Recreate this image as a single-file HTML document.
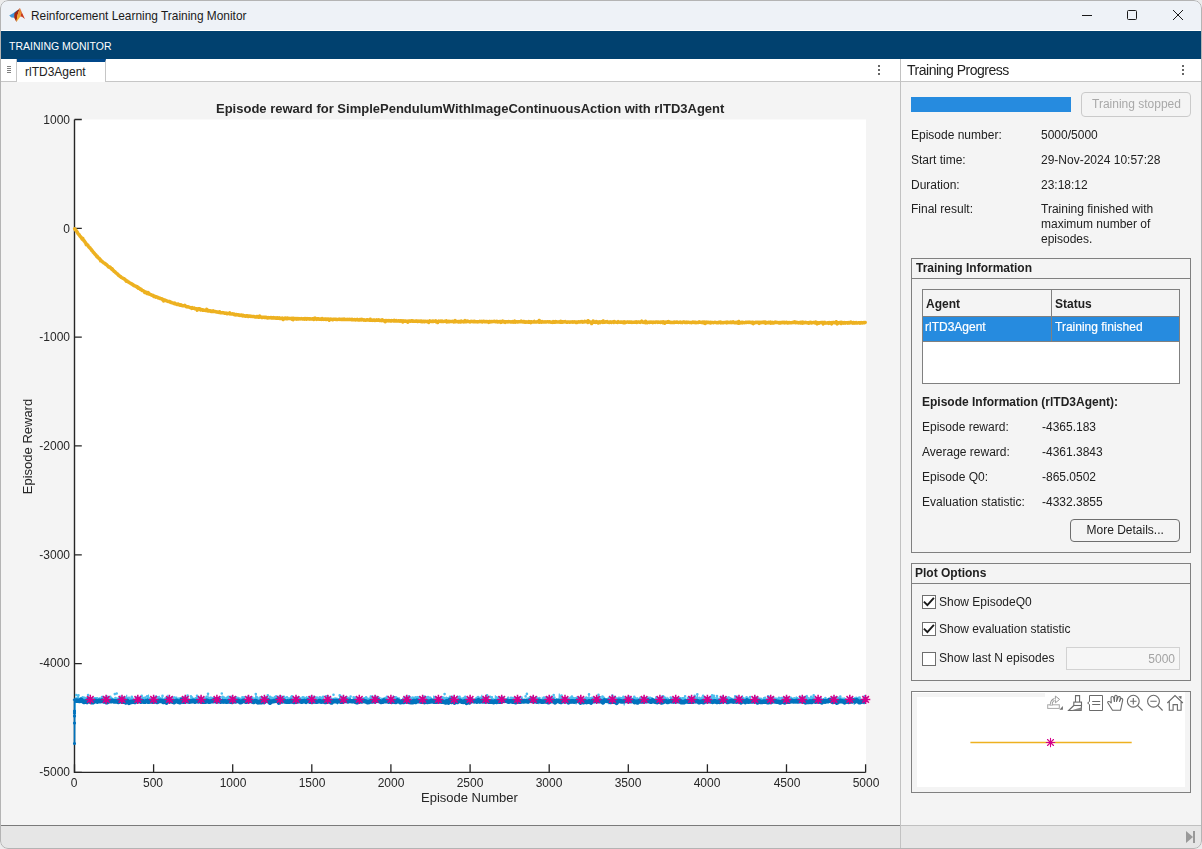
<!DOCTYPE html>
<html><head><meta charset="utf-8">
<style>
*{box-sizing:border-box;margin:0;padding:0}
html,body{width:1202px;height:849px;overflow:hidden;background:#ececec}
body{font-family:"Liberation Sans",sans-serif;font-size:12px;color:#212121;position:relative}
.a{position:absolute}
.t{position:absolute;white-space:nowrap;line-height:14px;font-size:12px}
.win{position:absolute;left:0;top:0;width:1202px;height:849px;border-radius:8px;overflow:hidden;background:#f4f4f4}
.frame{position:absolute;left:0;top:0;width:1202px;height:849px;border:1px solid #b4b4b4;border-radius:8px;pointer-events:none}
.chart{position:absolute;left:0;top:0}
.yl{position:absolute;left:20px;width:50px;text-align:right;font-size:12px;line-height:15px;color:#262626;will-change:transform}
.xl{position:absolute;top:776px;width:50px;text-align:center;font-size:12px;line-height:15px;color:#262626;will-change:transform}
.pb{position:absolute;border:1px solid #808080}
.chk{position:absolute;left:922px;width:14px;height:14px;border:1px solid #6e6e6e;background:#fff}
</style></head><body>
<div class="win">
  <!-- title bar -->
  <div class="a" style="left:0;top:0;width:1202px;height:30px;background:#eef2f7"></div>
  <div class="a" style="left:0;top:30px;width:1202px;height:1px;background:#fff"></div>
  <svg class="a" style="left:0;top:0" width="30" height="30" viewBox="0 0 30 30">
    <defs><linearGradient id="og" x1="0" y1="0" x2="0" y2="1"><stop offset="0" stop-color="#d9641f"/><stop offset="0.45" stop-color="#ee9a30"/><stop offset="1" stop-color="#f5bd2a"/></linearGradient></defs>
    <path d="M9.2 15.6 L14.4 12.6 L18.4 9.6 L15.6 14.2 L14.4 17.7 L11.4 17.4 Z" fill="#3f96da"/>
    <path d="M14.3 12.8 L18.4 9.6 L15.6 14.2 Z" fill="#1f5f9e"/>
    <path d="M14.4 13.4 L18.6 9.4 L19.9 8.1 L17.6 15 L16.4 22 L14.2 17.8 Z" fill="#a3260f"/>
    <path d="M19.9 8.1 L21.6 12.2 L20.4 16.4 L16.4 22 L17.4 15.4 Z" fill="url(#og)"/>
    <path d="M19.9 8.1 L24.9 18.9 L22 16.8 L20.4 16.4 L21.6 12.2 Z" fill="#c93a1b"/>
  </svg>
  <div class="t" style="left:31px;top:9px;font-size:11.9px;color:#1a1a1a">Reinforcement Learning Training Monitor</div>
  <!-- window controls -->
  <div class="a" style="left:1082px;top:15px;width:10px;height:1px;background:#1a1a1a"></div>
  <div class="a" style="left:1127px;top:10px;width:10px;height:10px;border:1px solid #1a1a1a;border-radius:1.5px"></div>
  <svg class="a" style="left:1172px;top:9px" width="12" height="12" viewBox="0 0 12 12"><path d="M1 1L11 11M11 1L1 11" stroke="#1a1a1a" stroke-width="1"/></svg>

  <!-- blue band -->
  <div class="a" style="left:0;top:31px;width:1202px;height:28px;background:#01416f"></div>
  <div class="t" style="left:9px;top:39px;font-size:10.5px;color:#fff">TRAINING MONITOR</div>

  <!-- left tab row -->
  <div class="a" style="left:0;top:59px;width:900px;height:23px;background:#fff;border-bottom:1px solid #c6c6c6"></div>
  <div class="a" style="left:0;top:59px;width:17px;height:23px;border-right:1px solid #c6c6c6;border-bottom:1px solid #c6c6c6;background:#fff"></div>
  <div class="a" style="left:7px;top:66px;width:4px;height:1px;background:#808080"></div>
  <div class="a" style="left:7px;top:68px;width:4px;height:1px;background:#808080"></div>
  <div class="a" style="left:7px;top:70px;width:4px;height:1px;background:#808080"></div>
  <div class="a" style="left:7px;top:72px;width:4px;height:1px;background:#808080"></div>
  <div class="a" style="left:17px;top:59px;width:89px;height:23px;background:#fff;border-top:3px solid #00478a;border-right:1px solid #c6c6c6"></div>
  <div class="t" style="left:25px;top:65px;font-size:12px;color:#212121">rlTD3Agent</div>
  <div class="a" style="left:878px;top:65px;width:2px;height:2px;background:#666"></div>
  <div class="a" style="left:878px;top:69px;width:2px;height:2px;background:#666"></div>
  <div class="a" style="left:878px;top:73px;width:2px;height:2px;background:#666"></div>

  <!-- left plot panel bg -->
  <div class="a" style="left:0;top:82px;width:900px;height:743px;background:#f4f4f4"></div>
  <div class="t" style="left:216px;top:102px;font-size:13px;font-weight:bold;color:#262626;will-change:transform">Episode reward for SimplePendulumWithImageContinuousAction with rlTD3Agent</div>
  <svg class="chart" width="1202" height="849" viewBox="0 0 1202 849"><rect x="74" y="119.5" width="792" height="652.7" fill="#fff"/><path d="M74.5 119.5V772.4H865.6" fill="none" stroke="#262626" stroke-width="1.4"/><path d="M74.5 119.5H81.8M74.5 228.3H81.8M74.5 337.1H81.8M74.5 445.9H81.8M74.5 554.8H81.8M74.5 663.6H81.8M74.5 772.4H81.8M74.5 772.4V764.3M153.6 772.4V764.3M232.7 772.4V764.3M311.8 772.4V764.3M390.9 772.4V764.3M470.1 772.4V764.3M549.2 772.4V764.3M628.3 772.4V764.3M707.4 772.4V764.3M786.5 772.4V764.3M865.6 772.4V764.3" stroke="#262626" stroke-width="1.3"/><path d="M74.7 228.8 75.2 229.6 75.7 230.1 76.2 230.7 76.7 231.5 77.2 232 77.7 233 78.2 233.9 78.7 234.2 79.2 234.8 79.7 235.7 80.2 236.3 80.7 236.9 81.2 237.3 81.7 238.2 82.2 239 82.7 238.4 83.2 239.9 83.7 240.2 84.2 241 84.7 241.5 85.2 242.4 85.7 242.8 86.2 244.6 86.7 244.3 87.2 244.9 87.7 244.9 88.2 246 88.7 246.7 89.2 247.3 89.7 247.5 90.2 248.3 90.7 248.8 91.2 249.4 91.7 250.4 92.2 250.6 92.7 251.4 93.2 252.2 93.7 252.5 94.2 253.2 94.7 253.8 95.2 254.4 95.7 254.7 96.2 255.5 96.7 256.4 97.2 256.3 97.7 257.4 98.2 257.7 98.7 258.1 99.2 258.3 99.7 259.4 100.2 259.4 100.7 260.8 101.2 260.7 101.7 261 102.2 261.6 102.7 261.9 103.2 262.4 103.7 263 104.2 262.9 104.7 263.5 105.2 263.7 105.7 264.3 106.2 264.3 106.7 264.9 107.2 265.3 107.7 266 108.2 266.4 108.7 266.9 109.2 266.8 109.7 267.5 110.2 267.3 110.7 268.1 111.2 268.6 111.7 269.3 112.2 268.9 112.7 269.9 113.2 270.3 113.7 270.8 114.2 271.6 114.7 271.6 115.2 272.1 115.7 272.7 116.2 273 116.7 273.4 117.2 273.7 117.7 274.3 118.2 274.7 118.7 275.4 119.2 275.7 119.7 276 120.2 276.5 120.7 276.7 121.2 277.3 121.7 277.5 122.2 277.9 122.7 277.9 123.2 278.6 123.7 278.5 124.2 278.8 124.7 279.5 125.2 279.7 125.7 280.3 126.2 281.1 126.7 280.7 127.2 281.1 127.7 281.6 128.2 282 128.7 282.1 129.2 282.4 129.7 283 130.2 283.2 130.7 283.2 131.2 283.7 131.7 284.1 132.2 284.1 132.7 284.7 133.2 284.8 133.7 285.5 134.2 285.6 134.7 285.9 135.2 286 135.7 286.4 136.2 286.3 136.7 286.8 137.2 287.4 137.7 287.1 138.2 288.1 138.7 287.8 139.2 288.6 139.7 288.5 140.2 289.2 140.7 289.3 141.2 289.3 141.7 290.2 142.2 290.5 142.7 290.4 143.2 290.7 143.7 291 144.2 291.1 144.7 292.5 145.2 291.8 145.7 292.2 146.2 292.3 146.7 293.3 147.2 292.7 147.7 293.5 148.2 292.5 148.7 294 149.2 294 149.7 294.1 150.2 294.4 150.7 294.6 151.2 294.9 151.7 295.1 152.2 295.3 152.7 295.3 153.2 295.6 153.7 296.4 154.2 296.1 154.7 296.2 155.2 296.7 155.7 297.1 156.2 296.7 156.7 297.1 157.2 297.2 157.7 297.2 158.2 297.9 158.7 297.9 159.2 298.1 159.7 298.1 160.2 298.6 160.7 298.5 161.2 298.8 161.7 298.8 162.2 298.9 162.7 299.7 163.2 299.5 163.7 300.9 164.2 299.9 164.7 300 165.2 300.2 165.7 300.6 166.2 300.6 166.7 300.8 167.2 301 167.7 301.4 168.2 301.5 168.7 301.6 169.2 301.6 169.7 301.5 170.2 302.2 170.7 302.4 171.2 302.3 171.7 302.6 172.2 302.8 172.7 303 173.2 303.2 173.7 303.1 174.2 303.6 174.7 303.2 175.2 303.8 175.7 303.9 176.2 304.1 176.7 304.5 177.2 304.5 177.7 304.1 178.2 304.1 178.7 304.8 179.2 304.6 179.7 304.9 180.2 305.2 180.7 304.8 181.2 304.9 181.7 305.5 182.2 305.6 182.7 305.7 183.2 305.8 183.7 305.8 184.2 305.8 184.7 305.4 185.2 306.1 185.7 306.1 186.2 306.7 186.7 306.7 187.2 306.9 187.7 306.7 188.2 306.9 188.7 307 189.2 307.1 189.7 307.5 190.2 307.4 190.7 307.7 191.2 307.8 191.7 308.3 192.2 307.7 192.7 308.3 193.2 308.2 193.7 308.3 194.2 308.1 194.7 308.4 195.2 308.8 195.7 308.7 196.2 308.8 196.7 308.8 197.2 310.2 197.7 309.1 198.2 308.7 198.7 309.1 199.2 308.9 199.7 308.7 200.2 309.4 200.7 309.9 201.2 309.7 201.7 309.5 202.2 309.7 202.7 310.2 203.2 310.1 203.7 310.1 204.2 310.2 204.7 310.3 205.2 310.5 205.7 310.5 206.2 310.5 206.7 309.3 207.2 310.7 207.7 310.5 208.2 311 208.7 310.5 209.2 310.8 209.7 310.9 210.2 310.7 210.7 311.4 211.2 311.5 211.7 311.1 212.2 311.4 212.7 311.4 213.2 310.8 213.7 311.5 214.2 311.5 214.7 311.6 215.2 311.4 215.7 311.7 216.2 311.7 216.7 312.1 217.2 312 217.7 312 218.2 312.4 218.7 312 219.2 312.1 219.7 311.9 220.2 312.7 220.7 312.6 221.2 312.7 221.7 312.7 222.2 312.6 222.7 312.7 223.2 312.7 223.7 312.8 224.2 312.9 224.7 313.3 225.2 313.2 225.7 313.1 226.2 313.1 226.7 313.2 227.2 313.7 227.7 313.6 228.2 313.5 228.7 313.5 229.2 313.4 229.7 312.8 230.2 314 230.7 313.8 231.2 313.9 231.7 314 232.2 314.1 232.7 313.8 233.2 314.2 233.7 314.1 234.2 314.6 234.7 314.3 235.2 314.7 235.7 314.9 236.2 314.6 236.7 314.6 237.2 314.8 237.7 314.9 238.2 314.7 238.7 315.1 239.2 315.5 239.7 315.1 240.2 315.2 240.7 315.1 241.2 315.4 241.7 315.1 242.2 315.2 242.7 315.8 243.2 315.4 243.7 315.9 244.2 316 244.7 315.8 245.2 315.9 245.7 316.3 246.2 315.9 246.7 315.8 247.2 315.7 247.7 316.1 248.2 316.4 248.7 316.4 249.2 316 249.7 316.1 250.2 316.2 250.7 316.4 251.2 316.3 251.7 316.5 252.2 316.5 252.7 316.4 253.2 316.5 253.7 316.6 254.2 316.6 254.7 316.8 255.2 317.1 255.7 316.9 256.2 316.8 256.7 316.5 257.2 317 257.7 316.5 258.2 316.7 258.7 317.2 259.2 317.2 259.7 316.1 260.2 316.8 260.7 317.1 261.2 317.1 261.7 317.4 262.2 317.2 262.7 317.4 263.2 317.2 263.7 317.2 264.2 317.4 264.7 317.4 265.2 317.3 265.7 317.6 266.2 317.3 266.7 317.8 267.2 317.9 267.7 317.9 268.2 317.6 268.7 317.8 269.2 317.7 269.7 317.7 270.2 317.7 270.7 317.5 271.2 317.5 271.7 318 272.2 317.8 272.7 317.9 273.2 318.1 273.7 317.6 274.2 317.8 274.7 318 275.2 318.1 275.7 317.9 276.2 318.3 276.7 318.1 277.2 317.8 277.7 317.9 278.2 318.3 278.7 318.3 279.2 317.8 279.7 318.5 280.2 318.4 280.7 318.6 281.2 318.2 281.7 318.2 282.2 318.1 282.7 318.9 283.2 319.4 283.7 318.7 284.2 318.3 284.7 318.5 285.2 318.1 285.7 318.4 286.2 318.7 286.7 318.2 287.2 318.1 287.7 318.6 288.2 318.3 288.7 318.5 289.2 318.5 289.7 318.6 290.2 318.5 290.7 318.4 291.2 318.6 291.7 319.1 292.2 318.4 292.7 318.7 293.2 319.7 293.7 318.4 294.2 318.7 294.7 318.6 295.2 318.5 295.7 318.9 296.2 318.6 296.7 319.1 297.2 318.6 297.7 318.9 298.2 318.7 298.7 318.6 299.2 318.9 299.7 318.8 300.2 319 300.7 318.8 301.2 318.6 301.7 318.8 302.2 318.9 302.7 319.1 303.2 318.7 303.7 318.9 304.2 318.5 304.7 319.1 305.2 318.7 305.7 318.5 306.2 318.9 306.7 319.2 307.2 318.6 307.7 318.7 308.2 318.8 308.7 318.7 309.2 319.1 309.7 318.8 310.2 318.8 310.7 319.1 311.2 318.9 311.7 319.1 312.2 318.8 312.7 318.8 313.2 318.6 313.7 319.5 314.2 319 314.7 319.1 315.2 318.2 315.7 319.1 316.2 319.1 316.7 319.5 317.2 318.9 317.7 318.8 318.2 318.9 318.7 318.8 319.2 319.3 319.7 319.3 320.2 318.9 320.7 318.9 321.2 319.1 321.7 319.5 322.2 318.6 322.7 319.3 323.2 319 323.7 319.4 324.2 319 324.7 319.2 325.2 318.9 325.7 319 326.2 319.5 326.7 319.4 327.2 319.2 327.7 319.1 328.2 318.9 328.7 319.2 329.2 320.3 329.7 319.3 330.2 319.3 330.7 319.1 331.2 319.3 331.7 319.3 332.2 319.6 332.7 319.8 333.2 319.3 333.7 319.2 334.2 319.3 334.7 319.2 335.2 319.2 335.7 319.4 336.2 319.2 336.7 319.5 337.2 319.4 337.7 319.5 338.2 319.4 338.7 319.3 339.2 319.2 339.7 319.4 340.2 319.3 340.7 319.5 341.2 319.5 341.7 319.2 342.2 319.5 342.7 319.2 343.2 319.4 343.7 319.4 344.2 319 344.7 319.5 345.2 319.6 345.7 319.5 346.2 319.4 346.7 319.5 347.2 319.3 347.7 319.5 348.2 319.4 348.7 319.6 349.2 319.3 349.7 319.6 350.2 319.6 350.7 319.6 351.2 319.5 351.7 319.8 352.2 319.3 352.7 319.8 353.2 319.7 353.7 319.7 354.2 319.8 354.7 319.5 355.2 319.6 355.7 319.9 356.2 319.8 356.7 319.8 357.2 319.4 357.7 319.9 358.2 320 358.7 320 359.2 319.8 359.7 319.5 360.2 320 360.7 319.8 361.2 319.3 361.7 319.9 362.2 319.5 362.7 319.6 363.2 319.8 363.7 320.2 364.2 319.8 364.7 320 365.2 320.3 365.7 320.3 366.2 320 366.7 319.9 367.2 319.7 367.7 319.9 368.2 320.1 368.7 320.1 369.2 320.1 369.7 320.3 370.2 319.2 370.7 320.1 371.2 320.3 371.7 320.3 372.2 320.4 372.7 320.3 373.2 320.1 373.7 320.3 374.2 320 374.7 319.9 375.2 320.4 375.7 320.2 376.2 320.3 376.7 319.9 377.2 320.2 377.7 320.2 378.2 320.1 378.7 319.8 379.2 320.3 379.7 320.6 380.2 320.5 380.7 320.3 381.2 320.4 381.7 320.6 382.2 319.8 382.7 320.4 383.2 320.6 383.7 320.6 384.2 320.9 384.7 320.8 385.2 321.7 385.7 320.6 386.2 320.7 386.7 320.5 387.2 320.6 387.7 320.8 388.2 321 388.7 320.6 389.2 320.6 389.7 320.7 390.2 321 390.7 320.7 391.2 321 391.7 320.5 392.2 320.7 392.7 320.7 393.2 320.9 393.7 321 394.2 320.4 394.7 320.6 395.2 320.9 395.7 320.7 396.2 320.5 396.7 321.1 397.2 321 397.7 321 398.2 320.8 398.7 321.1 399.2 320.8 399.7 321.2 400.2 320.7 400.7 320.7 401.2 321 401.7 320.8 402.2 321.1 402.7 321.9 403.2 320.8 403.7 321 404.2 320.9 404.7 321.2 405.2 320.9 405.7 320.9 406.2 321.3 406.7 321.5 407.2 321.5 407.7 322.1 408.2 321.1 408.7 321.4 409.2 321.1 409.7 320.9 410.2 321.1 410.7 321.2 411.2 320.9 411.7 320.8 412.2 320.8 412.7 321.3 413.2 321 413.7 321.1 414.2 321.2 414.7 321.3 415.2 321.1 415.7 321.3 416.2 321 416.7 321.1 417.2 321 417.7 321.5 418.2 321.2 418.7 321.1 419.2 321.1 419.7 321.2 420.2 321.4 420.7 320.9 421.2 321 421.7 321.2 422.2 321.8 422.7 321.5 423.2 321.2 423.7 321.4 424.2 321.7 424.7 321.2 425.2 321.2 425.7 321.6 426.2 321.4 426.7 321.5 427.2 321.2 427.7 321.7 428.2 321.7 428.7 322.3 429.2 321.5 429.7 320.9 430.2 321.5 430.7 321.3 431.2 321.4 431.7 321.5 432.2 321.3 432.7 321 433.2 321.5 433.7 321.2 434.2 321.3 434.7 321.3 435.2 321.3 435.7 320.9 436.2 321.7 436.7 321.5 437.2 321.7 437.7 322.5 438.2 321.4 438.7 321 439.2 321.2 439.7 321.2 440.2 321.3 440.7 321.5 441.2 321 441.7 321.5 442.2 321.1 442.7 321.5 443.2 321.4 443.7 321.4 444.2 321.4 444.7 321.3 445.2 321.3 445.7 321.1 446.2 320.9 446.7 321.9 447.2 321.9 447.7 321.8 448.2 321.6 448.7 321.3 449.2 321.8 449.7 321.5 450.2 321.5 450.7 321.4 451.2 321.5 451.7 321.4 452.2 321.5 452.7 321.3 453.2 321.4 453.7 322 454.2 321.5 454.7 321.5 455.2 320.7 455.7 321.7 456.2 321.3 456.7 321.5 457.2 321.7 457.7 321.6 458.2 321.6 458.7 321.9 459.2 321.4 459.7 321.6 460.2 321.4 460.7 321.9 461.2 321.1 461.7 321.4 462.2 321.5 462.7 321.7 463.2 321.7 463.7 321.9 464.2 321.2 464.7 321.7 465.2 320.7 465.7 321.4 466.2 321.7 466.7 321.4 467.2 321.1 467.7 321.5 468.2 321.3 468.7 321.5 469.2 321.7 469.7 321.7 470.2 322 470.7 321.6 471.2 321.3 471.7 321.5 472.2 321.4 472.7 321.4 473.2 321.7 473.7 321.5 474.2 321.2 474.7 321.8 475.2 321.6 475.7 321.7 476.2 321.7 476.7 321.8 477.2 321.7 477.7 321.9 478.2 321.7 478.7 321.7 479.2 321.7 479.7 321.3 480.2 321.6 480.7 321.6 481.2 321.7 481.7 321.4 482.2 322 482.7 321.7 483.2 321.4 483.7 321.3 484.2 321.6 484.7 321.7 485.2 321.5 485.7 321.7 486.2 321.5 486.7 321.8 487.2 321.5 487.7 321.7 488.2 321.9 488.7 322.3 489.2 321.5 489.7 321.6 490.2 321.5 490.7 321.9 491.2 321.5 491.7 321.6 492.2 321.7 492.7 321.5 493.2 321.5 493.7 321.6 494.2 321.3 494.7 321.4 495.2 321.6 495.7 321.8 496.2 321.7 496.7 321.3 497.2 321.6 497.7 321.9 498.2 321.9 498.7 321.7 499.2 321.5 499.7 321.9 500.2 321.6 500.7 322.3 501.2 321.6 501.7 322.1 502.2 321.8 502.7 321.2 503.2 321.6 503.7 322 504.2 321.6 504.7 321.7 505.2 322.3 505.7 321.9 506.2 321.7 506.7 321.7 507.2 321.8 507.7 322 508.2 321.7 508.7 321.4 509.2 321.7 509.7 321.8 510.2 321.8 510.7 322.1 511.2 321.9 511.7 322 512.2 321.5 512.7 322 513.2 322.2 513.7 322 514.2 321.8 514.7 321.1 515.2 322.2 515.7 321.6 516.2 321.8 516.7 321.9 517.2 322 517.7 321.7 518.2 321.9 518.7 321.7 519.2 321.8 519.7 321.8 520.2 321.6 520.7 321.8 521.2 321.2 521.7 321.6 522.2 321.8 522.7 322 523.2 321.6 523.7 321.9 524.2 321.6 524.7 322.1 525.2 322.3 525.7 322.3 526.2 321.8 526.7 322 527.2 321.9 527.7 321.9 528.2 322.2 528.7 321.5 529.2 322.1 529.7 321.8 530.2 322.2 530.7 322.6 531.2 321.7 531.7 321.9 532.2 322 532.7 321.9 533.2 322 533.7 321.7 534.2 321.4 534.7 322.1 535.2 322 535.7 321.9 536.2 321.9 536.7 322.1 537.2 321.8 537.7 321.7 538.2 321.8 538.7 322.1 539.2 320.5 539.7 322.1 540.2 321.7 540.7 321.6 541.2 322.2 541.7 321.9 542.2 321.6 542.7 321.8 543.2 322.1 543.7 322.1 544.2 321.8 544.7 322 545.2 322 545.7 321.8 546.2 322 546.7 321.9 547.2 321.8 547.7 321.8 548.2 321.9 548.7 321.9 549.2 321.8 549.7 321.8 550.2 322.2 550.7 322 551.2 322.1 551.7 322.2 552.2 322 552.7 322.4 553.2 321.7 553.7 322.1 554.2 321.8 554.7 322.3 555.2 322.3 555.7 321.5 556.2 321.7 556.7 322.1 557.2 322.1 557.7 322.1 558.2 321.9 558.7 322 559.2 322.1 559.7 321.9 560.2 322.2 560.7 321.4 561.2 322.1 561.7 321.7 562.2 322.2 562.7 321.9 563.2 321.8 563.7 322 564.2 321.7 564.7 321.8 565.2 321.6 565.7 321.9 566.2 322.1 566.7 322.2 567.2 321.9 567.7 322.2 568.2 322 568.7 321.9 569.2 322.1 569.7 322.2 570.2 321.9 570.7 321.9 571.2 321.9 571.7 322 572.2 321.8 572.7 322.2 573.2 321.9 573.7 322.1 574.2 321.8 574.7 322.1 575.2 322.1 575.7 321.9 576.2 322.4 576.7 322.1 577.2 322.4 577.7 322.2 578.2 321.8 578.7 321.9 579.2 322.1 579.7 322 580.2 322 580.7 321.9 581.2 321.6 581.7 322 582.2 321.5 582.7 322.1 583.2 321.9 583.7 321.9 584.2 322 584.7 321.4 585.2 321.7 585.7 321.6 586.2 321.8 586.7 321.6 587.2 321.8 587.7 322.4 588.2 320.7 588.7 322.2 589.2 321.7 589.7 322.1 590.2 322 590.7 322 591.2 322.2 591.7 323.5 592.2 322.1 592.7 322.1 593.2 321 593.7 322.2 594.2 322 594.7 322.2 595.2 322 595.7 322.4 596.2 321.6 596.7 322 597.2 322.3 597.7 322 598.2 322.9 598.7 322 599.2 321.8 599.7 322.1 600.2 322.6 600.7 322.3 601.2 321.8 601.7 321.9 602.2 322 602.7 322.3 603.2 321 603.7 321.9 604.2 322.3 604.7 322.3 605.2 322 605.7 321.8 606.2 321.7 606.7 321.9 607.2 321.6 607.7 322.3 608.2 322 608.7 322.2 609.2 322.5 609.7 322.4 610.2 321.8 610.7 322.3 611.2 322.4 611.7 321.9 612.2 321.9 612.7 322.1 613.2 321.8 613.7 322.4 614.2 321.6 614.7 321.9 615.2 322.1 615.7 322.1 616.2 322.2 616.7 322.2 617.2 322.1 617.7 322.4 618.2 321.7 618.7 322.1 619.2 322 619.7 322.2 620.2 322.2 620.7 321.9 621.2 322 621.7 322.3 622.2 322.2 622.7 322 623.2 322.6 623.7 322.7 624.2 321.8 624.7 322.2 625.2 322.7 625.7 322.3 626.2 322.2 626.7 322.1 627.2 322 627.7 322.1 628.2 322 628.7 322.3 629.2 322.1 629.7 322.1 630.2 321.9 630.7 322.2 631.2 322 631.7 322.1 632.2 322.4 632.7 322.3 633.2 322.3 633.7 322.3 634.2 322.2 634.7 322.1 635.2 322.1 635.7 322.3 636.2 321.9 636.7 322.5 637.2 322.2 637.7 322 638.2 322.1 638.7 322 639.2 322.2 639.7 322 640.2 322.4 640.7 322 641.2 321.7 641.7 321.2 642.2 321.8 642.7 322.2 643.2 322.4 643.7 322.3 644.2 321.9 644.7 322 645.2 322.6 645.7 321.3 646.2 322.2 646.7 322.4 647.2 322.8 647.7 322.5 648.2 322.3 648.7 322.3 649.2 322.4 649.7 322.1 650.2 322 650.7 322.2 651.2 322 651.7 322.2 652.2 322.3 652.7 322.7 653.2 322 653.7 322.2 654.2 322.2 654.7 322.3 655.2 322.5 655.7 322.1 656.2 322.1 656.7 321.9 657.2 322 657.7 322.4 658.2 322.3 658.7 322 659.2 322.2 659.7 322.3 660.2 322.4 660.7 322.1 661.2 322.2 661.7 321.9 662.2 322 662.7 322.6 663.2 321.8 663.7 322.2 664.2 322.3 664.7 323.2 665.2 322.1 665.7 322.3 666.2 322.3 666.7 322.3 667.2 321.9 667.7 322.2 668.2 322.1 668.7 321.5 669.2 322.3 669.7 322.4 670.2 322.5 670.7 322.2 671.2 322.5 671.7 322.6 672.2 322.5 672.7 322.6 673.2 322.3 673.7 322.3 674.2 322.5 674.7 322 675.2 322.3 675.7 322.2 676.2 322.2 676.7 321.9 677.2 322.1 677.7 322.3 678.2 322.5 678.7 322.5 679.2 322.3 679.7 322.3 680.2 322.1 680.7 322.4 681.2 322.3 681.7 322.5 682.2 322.7 682.7 322.3 683.2 322 683.7 322.1 684.2 322 684.7 322.1 685.2 322.6 685.7 322.4 686.2 322 686.7 322.5 687.2 322.6 687.7 322.3 688.2 322.2 688.7 322.3 689.2 322.4 689.7 322.5 690.2 322.6 690.7 322.6 691.2 322.6 691.7 322.7 692.2 322.5 692.7 322 693.2 322.3 693.7 322.4 694.2 322.3 694.7 322.6 695.2 322.3 695.7 322.2 696.2 322.7 696.7 322.5 697.2 322.4 697.7 322.6 698.2 322.6 698.7 322.4 699.2 321.8 699.7 322.2 700.2 322.3 700.7 322.2 701.2 322.4 701.7 322.6 702.2 322.3 702.7 322.1 703.2 322.8 703.7 322.3 704.2 322.1 704.7 322.4 705.2 323.5 705.7 322.2 706.2 322.6 706.7 322.3 707.2 322.2 707.7 322.4 708.2 322.6 708.7 322.3 709.2 322.5 709.7 322.4 710.2 323 710.7 322.3 711.2 322.7 711.7 322.4 712.2 322.4 712.7 322.6 713.2 322.6 713.7 322.7 714.2 322.5 714.7 322.3 715.2 322.3 715.7 322.5 716.2 322.6 716.7 322.7 717.2 322.5 717.7 322.7 718.2 322.8 718.7 322.5 719.2 322.1 719.7 322.2 720.2 322.1 720.7 322.8 721.2 322.3 721.7 322.7 722.2 322.6 722.7 322.8 723.2 322.7 723.7 322.4 724.2 322.4 724.7 322.5 725.2 322.5 725.7 322.3 726.2 322.4 726.7 322.8 727.2 322.1 727.7 322.5 728.2 322.3 728.7 322.5 729.2 322.6 729.7 322.5 730.2 322.6 730.7 322.1 731.2 322.7 731.7 322.3 732.2 322.6 732.7 322.5 733.2 321.9 733.7 322.3 734.2 322.5 734.7 322.8 735.2 322.5 735.7 322.5 736.2 322.2 736.7 322.8 737.2 322.9 737.7 322.5 738.2 323.1 738.7 321.5 739.2 322.7 739.7 323.1 740.2 322.7 740.7 322.8 741.2 322.6 741.7 322.3 742.2 322.8 742.7 322.2 743.2 322.5 743.7 322.6 744.2 322.7 744.7 322.6 745.2 322.6 745.7 322.3 746.2 322.2 746.7 322.5 747.2 322.4 747.7 322.2 748.2 322.2 748.7 322.4 749.2 322.1 749.7 322.2 750.2 322.2 750.7 322.6 751.2 322.6 751.7 323 752.2 322.2 752.7 322.4 753.2 323.6 753.7 322.5 754.2 322.5 754.7 322.9 755.2 322.5 755.7 322.3 756.2 322.2 756.7 322.6 757.2 322.6 757.7 322.2 758.2 322.3 758.7 322.7 759.2 323.4 759.7 322.4 760.2 322.7 760.7 322.7 761.2 322.2 761.7 322.5 762.2 322.6 762.7 322.4 763.2 322.1 763.7 322.5 764.2 322.7 764.7 322.1 765.2 322.1 765.7 323.1 766.2 322.3 766.7 322.8 767.2 322.8 767.7 322.8 768.2 322.6 768.7 322.3 769.2 322.7 769.7 322.4 770.2 322 770.7 323.2 771.2 322.7 771.7 323 772.2 322.4 772.7 322.9 773.2 322.9 773.7 322.9 774.2 322.6 774.7 322.3 775.2 322.5 775.7 322.1 776.2 322.2 776.7 322.6 777.2 322.4 777.7 322.6 778.2 322.6 778.7 323 779.2 322.9 779.7 322.6 780.2 322.9 780.7 322.4 781.2 322.5 781.7 322.8 782.2 322.3 782.7 322.5 783.2 322.3 783.7 322.6 784.2 323 784.7 322.4 785.2 322.7 785.7 322.4 786.2 322.4 786.7 322.3 787.2 322.9 787.7 323.1 788.2 322.7 788.7 322.5 789.2 322.8 789.7 322.6 790.2 322.8 790.7 322.7 791.2 322.7 791.7 322.8 792.2 322.5 792.7 322.5 793.2 322.3 793.7 322.5 794.2 322.3 794.7 321.8 795.2 322.4 795.7 322.7 796.2 322.7 796.7 322.3 797.2 322.5 797.7 322.4 798.2 322.8 798.7 323 799.2 322.8 799.7 322.6 800.2 323 800.7 322.3 801.2 323 801.7 322.5 802.2 322 802.7 323.2 803.2 323 803.7 322.4 804.2 322.7 804.7 322.6 805.2 322.7 805.7 322.3 806.2 322.5 806.7 322.8 807.2 322.7 807.7 322.9 808.2 322.7 808.7 323.2 809.2 322.5 809.7 322.7 810.2 322.3 810.7 322.4 811.2 323 811.7 322.5 812.2 322.8 812.7 322.7 813.2 322.5 813.7 322.6 814.2 322.6 814.7 322.6 815.2 322.9 815.7 322 816.2 322.6 816.7 322.5 817.2 323.8 817.7 322.7 818.2 322.9 818.7 323.3 819.2 322.9 819.7 322.7 820.2 322.7 820.7 322.5 821.2 322.5 821.7 322.5 822.2 322.6 822.7 322.6 823.2 323.9 823.7 322.6 824.2 322.7 824.7 322.4 825.2 323.1 825.7 322.8 826.2 323.1 826.7 322.9 827.2 323 827.7 322.7 828.2 322.9 828.7 323.3 829.2 322.5 829.7 323 830.2 323.1 830.7 322.8 831.2 322.9 831.7 323.8 832.2 322.6 832.7 322.8 833.2 322.5 833.7 322.6 834.2 322.6 834.7 322.7 835.2 322.8 835.7 322.8 836.2 321.7 836.7 323.2 837.2 323.9 837.7 322.9 838.2 322.7 838.7 322.7 839.2 322.9 839.7 322.8 840.2 322.4 840.7 322.9 841.2 323.4 841.7 322.3 842.2 323 842.7 322.8 843.2 322.7 843.7 323.1 844.2 322.5 844.7 322.8 845.2 323.1 845.7 322.7 846.2 322.7 846.7 322.8 847.2 322.7 847.7 323.1 848.2 322.6 848.7 323 849.2 322.5 849.7 322.9 850.2 322.7 850.7 322.2 851.2 322.8 851.7 322.5 852.2 322.7 852.7 323.1 853.2 322.5 853.7 322.5 854.2 323.1 854.7 322.8 855.2 323.1 855.7 322.9 856.2 322.6 856.7 322.8 857.2 323.1 857.7 323 858.2 322.8 858.7 322.8 859.2 322.8 859.7 322.7 860.2 323.2 860.7 322.8 861.2 322.5 861.7 322.7 862.2 323 862.7 322.9 863.2 322.8 863.7 322.6 864.2 322.8 864.7 322.4 865.2 322.5" fill="none" stroke="#EDB120" stroke-width="3.5" stroke-linejoin="round" stroke-linecap="round"/><path d="M74.5 743.5 74.7 723 74.8 716 75 713 75.1 711 75.4 700 75.8 700.3 76.1 701.9 76.4 698.2 76.7 700 77 701.8 77.3 698.2 77.7 698.7 78 697.3 78.3 701 78.6 700.7 78.9 697.8 79.2 701.7 79.6 699.3 79.9 699.5 80.2 700.7 80.5 701.2 80.8 698.6 81.1 700.4 81.5 699.9 81.8 702.2 82.1 698.9 82.4 702.1 82.7 697.4 83 700.9 83.4 702.3 83.7 701 84 702 84.3 698.4 84.6 697.9 84.9 699.1 85.3 701.8 85.6 700.4 85.9 699.8 86.2 702.2 86.5 700.7 86.8 697 87.2 698.3 87.5 700.1 87.8 699.4 88.1 695 88.4 699.7 88.7 699.4 89.1 702.6 89.4 700 89.7 699.9 90 699.5 90.3 699.3 90.6 700 91 699.7 91.3 700 91.6 699.9 91.9 698.8 92.2 700.3 92.5 698.4 92.9 700.8 93.2 702.5 93.5 699.8 93.8 700.1 94.1 703.3 94.4 699.9 94.8 698.4 95.1 700.6 95.4 698.7 95.7 701 96 698.2 96.3 700.2 96.7 701.7 97 700.6 97.3 698.4 97.6 700.3 97.9 700.1 98.2 702.3 98.5 699.4 98.9 699.6 99.2 700.7 99.5 699.7 99.8 698.5 100.1 698.9 100.4 700.2 100.8 700 101.1 698.6 101.4 699.7 101.7 700.1 102 697 102.3 697.8 102.7 697 103 697.5 103.3 698.1 103.6 699.2 103.9 699.5 104.2 699.7 104.6 699.5 104.9 699.4 105.2 702.8 105.5 700.3 105.8 698.9 106.1 698.3 106.5 699.9 106.8 702.9 107.1 700.5 107.4 698.3 107.7 700.6 108 698.6 108.4 701.5 108.7 699.5 109 702.2 109.3 701.7 109.6 699.4 109.9 702.2 110.3 696.8 110.6 702.7 110.9 698 111.2 699.8 111.5 699.3 111.8 699.3 112.2 698.8 112.5 699.8 112.8 700.6 113.1 700.8 113.4 701.6 113.7 702.7 114.1 699.9 114.4 701.3 114.7 699.9 115 697.3 115.3 701.2 115.6 698.1 116 699.2 116.3 700.6 116.6 699.1 116.9 698.6 117.2 700.7 117.5 701.4 117.9 699 118.2 699.4 118.5 700.5 118.8 700 119.1 699.5 119.4 702.6 119.8 699.5 120.1 699.8 120.4 696.8 120.7 700.9 121 699.4 121.3 701.1 121.6 699.5 122 700.1 122.3 699.8 122.6 700 122.9 698.5 123.2 701.9 123.5 697.6 123.9 697.6 124.2 700.9 124.5 698.7 124.8 700.1 125.1 698.7 125.4 701 125.8 698.4 126.1 699.6 126.4 699.6 126.7 694.7 127 699.9 127.3 698.5 127.7 700.2 128 698.1 128.3 701.8 128.6 702.2 128.9 699.5 129.2 699.1 129.6 700.5 129.9 701.1 130.2 699.7 130.5 701 130.8 700.7 131.1 698.8 131.5 698.6 131.8 696.8 132.1 703.6 132.4 698.3 132.7 701.9 133 700.9 133.4 699.4 133.7 700.1 134 699.3 134.3 700.6 134.6 700.2 134.9 700.8 135.3 699.6 135.6 699.1 135.9 699.9 136.2 700.1 136.5 698.3 136.8 698.7 137.2 696.2 137.5 697.5 137.8 701.3 138.1 700.2 138.4 702.9 138.7 701.7 139.1 698.3 139.4 699.7 139.7 700.5 140 701.2 140.3 700.7 140.6 700.8 141 701.4 141.3 701.4 141.6 701 141.9 701.3 142.2 700.1 142.5 697.9 142.9 701 143.2 699.1 143.5 702.2 143.8 703.1 144.1 698.7 144.4 702.5 144.7 702.3 145.1 702.2 145.4 697.6 145.7 701.4 146 702.6 146.3 699.6 146.6 699.6 147 699.6 147.3 700.3 147.6 703.8 147.9 699.3 148.2 698.2 148.5 694.6 148.9 700.9 149.2 699.9 149.5 700.7 149.8 698.7 150.1 700.1 150.4 698.8 150.8 701.7 151.1 701.6 151.4 701.3 151.7 701 152 698.6 152.3 701 152.7 702.1 153 700.5 153.3 701.5 153.6 699.9 153.9 701.5 154.2 700.8 154.6 701.6 154.9 701.3 155.2 699.3 155.5 698.8 155.8 699.3 156.1 700.5 156.5 698.3 156.8 698.8 157.1 700 157.4 703.4 157.7 701.1 158 697 158.4 700.8 158.7 700.6 159 699.4 159.3 695.9 159.6 698.6 159.9 700.3 160.3 702.6 160.6 701.3 160.9 699.4 161.2 699.4 161.5 700.7 161.8 700.5 162.2 701.9 162.5 695.9 162.8 699.9 163.1 699.5 163.4 699 163.7 699.3 164.1 698.9 164.4 699.2 164.7 700.9 165 700.5 165.3 701.8 165.6 699.1 166 698.1 166.3 700.7 166.6 699.5 166.9 702.3 167.2 700.2 167.5 701 167.8 694.7 168.2 699.2 168.5 702.6 168.8 699.5 169.1 700.2 169.4 699.9 169.7 698.8 170.1 700.3 170.4 701.5 170.7 700.4 171 699.2 171.3 703.2 171.6 701.3 172 700.1 172.3 700 172.6 703.1 172.9 701 173.2 699.1 173.5 700.9 173.9 701.4 174.2 697.3 174.5 697.5 174.8 701.7 175.1 700.3 175.4 701.9 175.8 702 176.1 700 176.4 697.9 176.7 699.8 177 699.4 177.3 701.5 177.7 701.2 178 699.4 178.3 700.5 178.6 699.2 178.9 699.7 179.2 700.7 179.6 700.1 179.9 699.3 180.2 699 180.5 702.8 180.8 702.5 181.1 699.6 181.5 700.9 181.8 697.5 182.1 698.5 182.4 699.7 182.7 698.3 183 698.1 183.4 699.6 183.7 699 184 701.9 184.3 697.3 184.6 698.3 184.9 701.4 185.3 701.3 185.6 702.2 185.9 699.3 186.2 698.8 186.5 701.7 186.8 701.4 187.2 698.7 187.5 703.2 187.8 700.4 188.1 701.6 188.4 700 188.7 699.4 189.1 701 189.4 700 189.7 700.3 190 699.5 190.3 700.1 190.6 701.1 190.9 696.3 191.3 701.1 191.6 697 191.9 701.4 192.2 699.3 192.5 701.8 192.8 699.8 193.2 702.4 193.5 699.9 193.8 698.8 194.1 698.9 194.4 700.5 194.7 701 195.1 698.7 195.4 703.5 195.7 699.3 196 699.8 196.3 698 196.6 701.5 197 695.8 197.3 698.5 197.6 699 197.9 701.1 198.2 698.5 198.5 699.3 198.9 699.7 199.2 700 199.5 699.7 199.8 699.5 200.1 697.8 200.4 698.7 200.8 699.9 201.1 697.5 201.4 699.5 201.7 700.5 202 702 202.3 700 202.7 698.6 203 700.4 203.3 700 203.6 700.9 203.9 700.4 204.2 699.2 204.6 700.7 204.9 699.7 205.2 703.4 205.5 699.7 205.8 698.3 206.1 702.7 206.5 700.9 206.8 700.2 207.1 699.8 207.4 700.2 207.7 700.5 208 693.8 208.4 703.5 208.7 696.7 209 700.4 209.3 701.1 209.6 701.4 209.9 697 210.3 699 210.6 699.1 210.9 701.6 211.2 701.6 211.5 700.9 211.8 700 212.2 700.8 212.5 701.1 212.8 701.1 213.1 702.3 213.4 698.3 213.7 699 214.1 699.5 214.4 702.3 214.7 699.4 215 701.2 215.3 700.5 215.6 700.3 215.9 701.8 216.3 700.2 216.6 700.9 216.9 701.4 217.2 701.5 217.5 697.8 217.8 699.7 218.2 700.6 218.5 702.7 218.8 702.1 219.1 701.3 219.4 699.8 219.7 700.5 220.1 697.2 220.4 698.9 220.7 699.4 221 699.4 221.3 701.5 221.6 700.1 222 700.5 222.3 699.2 222.6 696.9 222.9 697.9 223.2 700 223.5 699.9 223.9 699.3 224.2 698.1 224.5 696.5 224.8 702.2 225.1 698.8 225.4 701.3 225.8 698.7 226.1 700.4 226.4 702.1 226.7 697.8 227 702.7 227.3 700.3 227.7 698.4 228 699.1 228.3 696.7 228.6 698.6 228.9 697.6 229.2 699.3 229.6 698.4 229.9 701.6 230.2 700.9 230.5 699.5 230.8 701.5 231.1 701.5 231.5 697.5 231.8 698.7 232.1 700.8 232.4 700.2 232.7 699.5 233 700.2 233.4 699.4 233.7 699.4 234 699.1 234.3 701.7 234.6 698.5 234.9 699.1 235.3 697.3 235.6 701.1 235.9 701.3 236.2 698.8 236.5 697.6 236.8 697.8 237.2 701.3 237.5 698.3 237.8 700.3 238.1 701.3 238.4 698.1 238.7 700.1 239 700.4 239.4 699.1 239.7 702 240 698.7 240.3 700.6 240.6 699.8 240.9 701.9 241.3 697.9 241.6 700.1 241.9 699.6 242.2 699.3 242.5 699.9 242.8 700.7 243.2 699.3 243.5 698.4 243.8 699.3 244.1 698.3 244.4 697.4 244.7 699.2 245.1 700.2 245.4 701.2 245.7 700.7 246 699.8 246.3 700.4 246.6 700.5 247 701.2 247.3 698 247.6 699.7 247.9 699.4 248.2 696.5 248.5 699.7 248.9 702.2 249.2 700.3 249.5 700.8 249.8 700.3 250.1 699.9 250.4 700.4 250.8 700.5 251.1 698.5 251.4 698.7 251.7 700.5 252 700.3 252.3 697.8 252.7 698.6 253 697.9 253.3 701.9 253.6 699.9 253.9 699.9 254.2 699.9 254.6 701.7 254.9 700.4 255.2 700.4 255.5 700.5 255.8 694 256.1 698.5 256.5 700.3 256.8 698.7 257.1 698.5 257.4 700.4 257.7 701.1 258 700.8 258.4 701.6 258.7 699 259 701.1 259.3 701 259.6 697.9 259.9 698.2 260.3 698.9 260.6 700.7 260.9 697.3 261.2 700 261.5 700.3 261.8 699.4 262.1 700.4 262.5 698 262.8 698.9 263.1 700.5 263.4 699 263.7 698.2 264 700.7 264.4 697.5 264.7 699.9 265 701.5 265.3 697.2 265.6 700.6 265.9 700.5 266.3 702.5 266.6 699.8 266.9 703 267.2 701.7 267.5 698.5 267.8 695.2 268.2 700.4 268.5 700.8 268.8 701.6 269.1 699.4 269.4 698.7 269.7 700 270.1 696.7 270.4 698.7 270.7 699.4 271 698.3 271.3 703.5 271.6 701 272 699.9 272.3 701.1 272.6 700 272.9 699 273.2 700.8 273.5 698.1 273.9 698.9 274.2 701.4 274.5 700.2 274.8 701.2 275.1 700.5 275.4 698.1 275.8 696.5 276.1 701.6 276.4 699.8 276.7 701.2 277 700.1 277.3 698.2 277.7 701.3 278 699.5 278.3 697.3 278.6 702.3 278.9 699.7 279.2 699.1 279.6 696.6 279.9 699.4 280.2 700.4 280.5 697.2 280.8 699.4 281.1 696.6 281.5 701.4 281.8 700.1 282.1 701.4 282.4 702.5 282.7 699 283 696.1 283.4 701.4 283.7 698.7 284 696.9 284.3 700.7 284.6 698.8 284.9 698.1 285.2 701 285.6 697 285.9 700 286.2 699 286.5 701.1 286.8 699.6 287.1 701.8 287.5 700.9 287.8 703.4 288.1 700.7 288.4 699.1 288.7 699.9 289 698.8 289.4 698.3 289.7 700.3 290 700.8 290.3 699.5 290.6 700 290.9 698.5 291.3 699 291.6 699.2 291.9 696.3 292.2 697.2 292.5 695.7 292.8 698.3 293.2 699.3 293.5 696.9 293.8 700.5 294.1 701.8 294.4 699.7 294.7 700.6 295.1 700 295.4 701 295.7 699.9 296 697.6 296.3 702.5 296.6 697.5 297 700.7 297.3 701.1 297.6 697.9 297.9 699.2 298.2 699.4 298.5 700 298.9 701 299.2 697.9 299.5 699.6 299.8 701.2 300.1 701.3 300.4 701.5 300.8 701.1 301.1 699.5 301.4 698.3 301.7 701.6 302 701 302.3 698.4 302.7 697.4 303 700.5 303.3 702.2 303.6 699.1 303.9 697.9 304.2 700.6 304.6 700.5 304.9 699.1 305.2 697.7 305.5 702.1 305.8 699.2 306.1 702 306.5 697.7 306.8 696.1 307.1 698.7 307.4 699.5 307.7 700.6 308 699.4 308.3 701 308.7 700.3 309 698.8 309.3 697.9 309.6 698.5 309.9 701.1 310.2 698.2 310.6 696.9 310.9 701 311.2 701.4 311.5 698 311.8 700.8 312.1 698.9 312.5 698.2 312.8 700.6 313.1 698.3 313.4 700.8 313.7 699.7 314 698 314.4 701.3 314.7 698.8 315 699.3 315.3 700.7 315.6 701.6 315.9 699.1 316.3 699.8 316.6 698.5 316.9 697.5 317.2 700.4 317.5 700.7 317.8 701.8 318.2 699.6 318.5 702.8 318.8 698.5 319.1 698.9 319.4 700.3 319.7 697.2 320.1 700.6 320.4 699.7 320.7 700 321 697.7 321.3 699.4 321.6 700.6 322 700.8 322.3 700 322.6 701 322.9 703.1 323.2 699.6 323.5 698.1 323.9 703.1 324.2 698.6 324.5 701.7 324.8 700.5 325.1 698.6 325.4 701.1 325.8 702.7 326.1 696.3 326.4 700.4 326.7 700.1 327 702.2 327.3 696.3 327.7 698.2 328 696.2 328.3 700.6 328.6 701.1 328.9 699.3 329.2 699.6 329.6 698.3 329.9 700.9 330.2 700 330.5 701 330.8 699.5 331.1 698.7 331.4 699 331.8 702.7 332.1 701.8 332.4 701.4 332.7 701.8 333 699.6 333.3 699.9 333.7 697.9 334 700.9 334.3 701.7 334.6 699.4 334.9 702.6 335.2 698.5 335.6 699.7 335.9 700.2 336.2 701.6 336.5 701.8 336.8 698.8 337.1 701.3 337.5 704.4 337.8 699.1 338.1 701.1 338.4 699.7 338.7 701.3 339 699.5 339.4 701.3 339.7 695.4 340 698.8 340.3 700.3 340.6 700.9 340.9 700 341.3 699.1 341.6 702.3 341.9 696.9 342.2 699.4 342.5 701.6 342.8 699.6 343.2 698 343.5 700.5 343.8 699.5 344.1 700 344.4 698.1 344.7 699.6 345.1 699.8 345.4 700 345.7 698.8 346 699 346.3 697.1 346.6 701.5 347 699 347.3 698.4 347.6 696.7 347.9 699 348.2 698.7 348.5 702.4 348.9 696.9 349.2 702.3 349.5 699 349.8 698.4 350.1 699.9 350.4 699.7 350.8 701.3 351.1 699.6 351.4 699.6 351.7 700 352 700.8 352.3 701.8 352.7 700.1 353 700.8 353.3 701.3 353.6 697.4 353.9 700.2 354.2 698.8 354.5 699.2 354.9 698.9 355.2 702.3 355.5 697.6 355.8 701.6 356.1 701.7 356.4 700.6 356.8 699.2 357.1 700.1 357.4 700.6 357.7 700.1 358 697.6 358.3 698.8 358.7 699.6 359 698.7 359.3 700.4 359.6 700 359.9 702.6 360.2 699.4 360.6 699.7 360.9 702.3 361.2 701.3 361.5 698.6 361.8 701.1 362.1 698.7 362.5 700.6 362.8 703.5 363.1 699.7 363.4 701.4 363.7 700.9 364 702.2 364.4 699.3 364.7 700.2 365 701 365.3 699.6 365.6 699.2 365.9 700.5 366.3 701.2 366.6 700.9 366.9 698.9 367.2 700.4 367.5 700.2 367.8 702 368.2 699 368.5 699.6 368.8 702.4 369.1 699.6 369.4 698.7 369.7 699.4 370.1 699.4 370.4 699.3 370.7 702.3 371 699 371.3 697.9 371.6 701.9 372 700.3 372.3 696.5 372.6 700.4 372.9 700.7 373.2 701 373.5 700.4 373.9 697.9 374.2 700.1 374.5 698.7 374.8 700.5 375.1 700.1 375.4 702.1 375.8 696.8 376.1 698.8 376.4 698.7 376.7 698.6 377 700.8 377.3 698.5 377.6 698.6 378 701 378.3 698.3 378.6 697.8 378.9 698.6 379.2 700.2 379.5 698.1 379.9 700 380.2 699 380.5 701.3 380.8 699.7 381.1 702.6 381.4 699.8 381.8 698.8 382.1 700.1 382.4 699.7 382.7 699.2 383 703.4 383.3 701.9 383.7 701.5 384 701.5 384.3 698.6 384.6 699.2 384.9 698.3 385.2 701.6 385.6 702.6 385.9 699.4 386.2 699.9 386.5 699.4 386.8 700.5 387.1 700.2 387.5 700.5 387.8 700.7 388.1 700.2 388.4 699.7 388.7 701.9 389 700.6 389.4 698.9 389.7 702.1 390 699.9 390.3 701.3 390.6 699.9 390.9 702.5 391.3 702.5 391.6 700.1 391.9 699.8 392.2 699.6 392.5 700.8 392.8 700.9 393.2 695.3 393.5 697.3 393.8 698.7 394.1 702 394.4 700.3 394.7 697.2 395.1 700.1 395.4 698.9 395.7 699.4 396 698.6 396.3 699.4 396.6 698.4 397 699.3 397.3 698.8 397.6 701.3 397.9 699.5 398.2 700.3 398.5 699.1 398.9 701.1 399.2 700.3 399.5 699.3 399.8 701.5 400.1 699.7 400.4 703.5 400.7 700.3 401.1 700.2 401.4 700.3 401.7 701.9 402 700.3 402.3 699.4 402.6 698.3 403 702.6 403.3 701.9 403.6 702.3 403.9 699.9 404.2 698.4 404.5 700.4 404.9 698.7 405.2 699.3 405.5 701.8 405.8 699.2 406.1 695.2 406.4 700.1 406.8 697.5 407.1 700.8 407.4 698.6 407.7 699.1 408 698 408.3 698.2 408.7 699.3 409 696.2 409.3 698.2 409.6 699.8 409.9 700.7 410.2 699.6 410.6 700.7 410.9 700.2 411.2 699.9 411.5 698.6 411.8 699.5 412.1 701.4 412.5 701.3 412.8 700.8 413.1 698.8 413.4 701.8 413.7 698.9 414 700 414.4 702.5 414.7 697.3 415 700 415.3 701.1 415.6 699.5 415.9 697.4 416.3 701.3 416.6 701.8 416.9 702.3 417.2 698.4 417.5 697.7 417.8 700.4 418.2 702.9 418.5 699.6 418.8 701.5 419.1 699.1 419.4 700.8 419.7 701.1 420.1 699.4 420.4 702.6 420.7 702.7 421 699 421.3 698.2 421.6 697.3 422 701.6 422.3 700.3 422.6 699.4 422.9 698.9 423.2 699.3 423.5 701.9 423.8 700.8 424.2 696.6 424.5 698 424.8 697.7 425.1 700.5 425.4 700.2 425.7 701.3 426.1 699.3 426.4 699.4 426.7 699 427 701 427.3 698.3 427.6 699.1 428 697.1 428.3 701.1 428.6 697.9 428.9 699.2 429.2 699.9 429.5 699.4 429.9 696.5 430.2 700.7 430.5 701.1 430.8 700.1 431.1 699.3 431.4 699.8 431.8 703.2 432.1 698.5 432.4 701.2 432.7 702.7 433 701.6 433.3 700 433.7 695.5 434 702.7 434.3 699.2 434.6 698.3 434.9 697.4 435.2 701.3 435.6 699.9 435.9 702 436.2 696.1 436.5 700.6 436.8 699.9 437.1 699.7 437.5 700.4 437.8 699.5 438.1 701.2 438.4 698.2 438.7 700.7 439 701.7 439.4 698.5 439.7 703 440 699.9 440.3 699 440.6 700.8 440.9 700.8 441.3 700.5 441.6 700.7 441.9 699.9 442.2 697.3 442.5 702.2 442.8 700.4 443.2 698.1 443.5 701.2 443.8 700.8 444.1 700.7 444.4 700.8 444.7 702.2 445.1 698.3 445.4 701.7 445.7 703.3 446 700.5 446.3 696.6 446.6 699.9 446.9 698.4 447.3 698.3 447.6 699.3 447.9 702.4 448.2 698.9 448.5 700 448.8 701.2 449.2 699.4 449.5 701.2 449.8 699.2 450.1 703.2 450.4 700.4 450.7 699.2 451.1 699.5 451.4 699.1 451.7 699.5 452 699.3 452.3 696.9 452.6 699.8 453 697.4 453.3 698.8 453.6 699.4 453.9 699.5 454.2 699.9 454.5 701 454.9 699.4 455.2 701.7 455.5 701.6 455.8 701.2 456.1 700.6 456.4 700.2 456.8 700 457.1 699.5 457.4 700.4 457.7 697 458 697.6 458.3 700.2 458.7 702.5 459 699.2 459.3 698.8 459.6 696.9 459.9 700 460.2 699.5 460.6 698.9 460.9 697.3 461.2 702.3 461.5 700.5 461.8 702.1 462.1 701.2 462.5 698.6 462.8 700 463.1 700.7 463.4 699.4 463.7 699.4 464 699 464.4 699 464.7 700 465 697.5 465.3 696.7 465.6 699.2 465.9 697.2 466.3 700.1 466.6 698.8 466.9 699.8 467.2 702.5 467.5 699.4 467.8 700.2 468.2 700.4 468.5 701.5 468.8 698.5 469.1 701.4 469.4 700.1 469.7 700.2 470.1 701 470.4 701.3 470.7 700.5 471 702.4 471.3 702.6 471.6 701.2 471.9 701.3 472.3 701.7 472.6 700.6 472.9 702 473.2 699 473.5 701.1 473.8 699.3 474.2 699.1 474.5 701.5 474.8 701.8 475.1 701.7 475.4 699.4 475.7 700.5 476.1 699.3 476.4 699.6 476.7 700.8 477 700.2 477.3 701.1 477.6 699.8 478 696.7 478.3 702.3 478.6 700.7 478.9 699.3 479.2 702.8 479.5 703.6 479.9 698.9 480.2 699.3 480.5 698.1 480.8 699.2 481.1 699 481.4 699.7 481.8 694.9 482.1 698.9 482.4 703.1 482.7 702.8 483 699.9 483.3 700 483.7 699.6 484 700.5 484.3 699.5 484.6 699.3 484.9 701.8 485.2 698.9 485.6 699.8 485.9 698.2 486.2 700.6 486.5 698.2 486.8 697.4 487.1 695.4 487.5 699.4 487.8 698.5 488.1 702.6 488.4 700.4 488.7 699.9 489 700.1 489.4 700.8 489.7 699.7 490 701.8 490.3 699.9 490.6 699.6 490.9 701.1 491.3 699.7 491.6 697.5 491.9 697.3 492.2 699.6 492.5 700.1 492.8 703.3 493.2 698.2 493.5 699.1 493.8 699.1 494.1 702.5 494.4 699.5 494.7 699.7 495 700.8 495.4 695.4 495.7 701.6 496 700.1 496.3 700.9 496.6 697.4 496.9 701.6 497.3 701.1 497.6 703.8 497.9 699.9 498.2 702 498.5 698.2 498.8 700 499.2 697.2 499.5 701.4 499.8 700 500.1 699.6 500.4 700.1 500.7 697.8 501.1 700.2 501.4 700.2 501.7 700.7 502 701.1 502.3 700 502.6 697.5 503 698.1 503.3 696.9 503.6 700.1 503.9 701.7 504.2 700.3 504.5 701.6 504.9 700.4 505.2 699.5 505.5 702.8 505.8 699.9 506.1 699.9 506.4 700.3 506.8 701.5 507.1 699.7 507.4 700.4 507.7 699.1 508 700.7 508.3 696.8 508.7 699 509 699.3 509.3 699.8 509.6 699.4 509.9 701.5 510.2 701.1 510.6 698.6 510.9 700.4 511.2 702.2 511.5 699.2 511.8 699.6 512.1 700.8 512.5 698 512.8 699.9 513.1 702 513.4 702.7 513.7 698.7 514 701.9 514.4 698.3 514.7 700 515 700.9 515.3 699.9 515.6 699.6 515.9 701 516.3 702.4 516.6 701.1 516.9 701.9 517.2 701.7 517.5 701.6 517.8 703.3 518.1 701.9 518.5 700.4 518.8 700.8 519.1 698.1 519.4 697.8 519.7 699.7 520 700.2 520.4 699.7 520.7 699.9 521 701.8 521.3 700.7 521.6 697.6 521.9 701.4 522.3 701.3 522.6 700.3 522.9 700.6 523.2 699.4 523.5 700.9 523.8 699.5 524.2 700.1 524.5 701.6 524.8 700.4 525.1 700.3 525.4 702.4 525.7 699.9 526.1 701.8 526.4 700.6 526.7 699.4 527 699.6 527.3 701.1 527.6 702.8 528 698.9 528.3 698.5 528.6 702.4 528.9 701.5 529.2 700.6 529.5 698 529.9 701.9 530.2 698 530.5 701.6 530.8 699.9 531.1 700.3 531.4 699.6 531.8 698.9 532.1 699.6 532.4 701.1 532.7 697.1 533 698.1 533.3 701.3 533.7 700.6 534 703 534.3 698.3 534.6 698.7 534.9 700.1 535.2 700.4 535.6 700.6 535.9 700.5 536.2 701.3 536.5 697.4 536.8 700.5 537.1 699.4 537.5 699.2 537.8 702.7 538.1 699.7 538.4 702 538.7 704.1 539 699.7 539.4 700.2 539.7 700.1 540 700.4 540.3 702.4 540.6 701.5 540.9 700.4 541.2 700.3 541.6 698.9 541.9 700.7 542.2 698.3 542.5 699 542.8 700.3 543.1 699.1 543.5 698 543.8 700 544.1 698.6 544.4 701 544.7 700.5 545 698.2 545.4 700.7 545.7 701.2 546 700.4 546.3 699.9 546.6 699.5 546.9 703 547.3 700.4 547.6 700.2 547.9 699.7 548.2 698.4 548.5 699.4 548.8 701 549.2 700.7 549.5 700.6 549.8 700.4 550.1 698.8 550.4 700.3 550.7 701.6 551.1 700.1 551.4 696.7 551.7 699 552 697.3 552.3 698.8 552.6 703.5 553 699.5 553.3 698.8 553.6 697.7 553.9 699.8 554.2 702.1 554.5 698.9 554.9 700.8 555.2 700.5 555.5 699.2 555.8 701.2 556.1 699.5 556.4 699 556.8 699.1 557.1 700.5 557.4 703 557.7 701.6 558 699.1 558.3 700.2 558.7 698.9 559 698.7 559.3 693.5 559.6 700.7 559.9 699.3 560.2 699.8 560.6 696.3 560.9 700.7 561.2 698 561.5 695.5 561.8 700.8 562.1 700.6 562.5 700.4 562.8 700.4 563.1 700.9 563.4 698.6 563.7 697.3 564 699 564.3 699.9 564.7 700.1 565 700.7 565.3 698.6 565.6 701 565.9 698.5 566.2 701 566.6 698.7 566.9 701.8 567.2 700.2 567.5 697.3 567.8 699.6 568.1 703.3 568.5 701.4 568.8 699.1 569.1 702.3 569.4 699.9 569.7 699.7 570 701 570.4 699.4 570.7 700 571 699 571.3 703.4 571.6 698.3 571.9 696.6 572.3 702.2 572.6 697.9 572.9 701.2 573.2 699 573.5 699.1 573.8 701.1 574.2 698.4 574.5 700.3 574.8 700.8 575.1 701.5 575.4 698.9 575.7 698.3 576.1 704.5 576.4 698.4 576.7 700.6 577 700 577.3 699.5 577.6 702.4 578 699.5 578.3 701.6 578.6 698.8 578.9 701.4 579.2 697.9 579.5 700.5 579.9 700.1 580.2 699.3 580.5 698.5 580.8 699.2 581.1 698.1 581.4 699 581.8 700.3 582.1 701.1 582.4 699.2 582.7 701 583 701.7 583.3 700.1 583.7 701 584 700.9 584.3 698.9 584.6 701 584.9 699.5 585.2 702 585.6 699.4 585.9 701.7 586.2 699.2 586.5 699.7 586.8 699.5 587.1 700.9 587.4 700 587.8 698.8 588.1 700.3 588.4 699.6 588.7 700.3 589 694.4 589.3 701.6 589.7 698.7 590 701.1 590.3 700.7 590.6 702.6 590.9 700.8 591.2 699.6 591.6 701.2 591.9 699.5 592.2 697.8 592.5 699.8 592.8 700.5 593.1 700 593.5 702.5 593.8 699.2 594.1 701.6 594.4 700.7 594.7 699.8 595 698.8 595.4 700.1 595.7 698.8 596 698.4 596.3 698.1 596.6 702.1 596.9 701 597.3 699.4 597.6 700.2 597.9 698.8 598.2 700.5 598.5 694.7 598.8 699.7 599.2 698.9 599.5 699.1 599.8 700.6 600.1 697.3 600.4 701.7 600.7 700.9 601.1 697.2 601.4 700.4 601.7 699.4 602 699.1 602.3 699.7 602.6 699.7 603 698.7 603.3 699.2 603.6 701.6 603.9 697.7 604.2 701.3 604.5 698.8 604.9 700.7 605.2 700.9 605.5 699.6 605.8 699.9 606.1 699.6 606.4 698.4 606.8 702.5 607.1 699.3 607.4 699.7 607.7 698.6 608 700.7 608.3 699.9 608.7 704.1 609 699.9 609.3 699.8 609.6 699.9 609.9 701.4 610.2 700 610.5 700.2 610.9 700 611.2 698 611.5 702.6 611.8 697.9 612.1 699.5 612.4 699.7 612.8 700.5 613.1 700.9 613.4 697 613.7 700.2 614 698.5 614.3 700.7 614.7 697.1 615 700.4 615.3 696.6 615.6 698 615.9 699.8 616.2 700.9 616.6 701.2 616.9 700.6 617.2 699.1 617.5 700.4 617.8 699.9 618.1 699.2 618.5 701.6 618.8 700.2 619.1 700.1 619.4 701.2 619.7 699.2 620 699.8 620.4 698.2 620.7 698.6 621 697.9 621.3 698.2 621.6 698.4 621.9 699.8 622.3 700.7 622.6 699.1 622.9 700.1 623.2 703.2 623.5 699 623.8 699.5 624.2 705.4 624.5 702.7 624.8 699.3 625.1 698.3 625.4 700.3 625.7 697.7 626.1 700.5 626.4 698.6 626.7 699.8 627 701 627.3 700.2 627.6 698.4 628 697.6 628.3 699 628.6 700.9 628.9 698.7 629.2 700.1 629.5 696.8 629.9 699.6 630.2 699.4 630.5 701.9 630.8 699.9 631.1 698.3 631.4 701.2 631.8 699.1 632.1 699.4 632.4 700.2 632.7 699 633 700.3 633.3 698.8 633.6 699.3 634 700.3 634.3 696.7 634.6 699.6 634.9 700.2 635.2 700.7 635.5 699.3 635.9 697.9 636.2 699.5 636.5 699.5 636.8 698.9 637.1 701.5 637.4 697.4 637.8 700.9 638.1 700.3 638.4 699.2 638.7 699 639 698 639.3 697.7 639.7 699.8 640 701.2 640.3 701.9 640.6 701.8 640.9 699.9 641.2 699.9 641.6 700.8 641.9 699 642.2 700.8 642.5 698.4 642.8 699.4 643.1 700.5 643.5 697.8 643.8 701.7 644.1 700.7 644.4 699.4 644.7 699.2 645 699.9 645.4 698.4 645.7 701 646 700 646.3 700.9 646.6 698 646.9 701.5 647.3 700.6 647.6 702.2 647.9 698.6 648.2 701 648.5 697.9 648.8 699.5 649.2 700 649.5 698.5 649.8 701.2 650.1 697.8 650.4 701.6 650.7 698.4 651.1 700.3 651.4 702.3 651.7 700.5 652 698.6 652.3 700.4 652.6 699.5 653 700.3 653.3 699.7 653.6 699.9 653.9 699.1 654.2 699.4 654.5 700.3 654.9 699.6 655.2 701.6 655.5 701.2 655.8 699.4 656.1 698.2 656.4 697.2 656.7 698.9 657.1 700.8 657.4 699.4 657.7 698.9 658 699.2 658.3 698 658.6 699.5 659 699.1 659.3 702.2 659.6 699.7 659.9 703.7 660.2 700.8 660.5 698.9 660.9 700.3 661.2 698.7 661.5 700.7 661.8 696.9 662.1 701.8 662.4 700.3 662.8 701.2 663.1 698.1 663.4 703.4 663.7 698.1 664 700.3 664.3 698.1 664.7 699.5 665 700.5 665.3 697.8 665.6 699.8 665.9 700.7 666.2 698.5 666.6 701.4 666.9 699.7 667.2 698.2 667.5 699 667.8 698.7 668.1 699.9 668.5 700.9 668.8 700 669.1 700.4 669.4 699.9 669.7 700.8 670 701.6 670.4 701.7 670.7 697.6 671 700.2 671.3 699.7 671.6 702.2 671.9 701.5 672.3 698 672.6 699.1 672.9 697.2 673.2 700.6 673.5 700.4 673.8 699.5 674.2 697.7 674.5 700.6 674.8 698.6 675.1 700.9 675.4 698.7 675.7 703.1 676.1 702.1 676.4 702.1 676.7 697.2 677 701.5 677.3 701.7 677.6 698.9 678 699.9 678.3 699.2 678.6 701.2 678.9 703.3 679.2 698.3 679.5 698 679.8 700.8 680.2 698.4 680.5 701.1 680.8 699.4 681.1 700.7 681.4 701.4 681.7 700.3 682.1 701.5 682.4 698.4 682.7 698.2 683 700.3 683.3 698.3 683.6 699.9 684 700.8 684.3 699.9 684.6 697.2 684.9 698.1 685.2 699 685.5 697.7 685.9 702.1 686.2 701.6 686.5 700.5 686.8 700.9 687.1 700.3 687.4 697.6 687.8 700.5 688.1 700.1 688.4 699.8 688.7 701.1 689 699.5 689.3 701.3 689.7 697.1 690 701 690.3 702.5 690.6 699.4 690.9 701.2 691.2 701.7 691.6 700.7 691.9 699 692.2 697.9 692.5 699.8 692.8 700.4 693.1 699.3 693.5 699.8 693.8 699.7 694.1 697.4 694.4 699.7 694.7 695.9 695 702.2 695.4 700.1 695.7 700.3 696 699.7 696.3 698.8 696.6 697.7 696.9 700.6 697.3 694.3 697.6 696.3 697.9 700.3 698.2 699.5 698.5 700 698.8 700.9 699.2 701.4 699.5 700.1 699.8 698.7 700.1 699.1 700.4 699.1 700.7 702.1 701.1 698.1 701.4 697.6 701.7 701.6 702 699.2 702.3 698.6 702.6 700.1 702.9 701.4 703.3 698.9 703.6 697.2 703.9 699.5 704.2 698.5 704.5 697.5 704.8 699 705.2 697.9 705.5 699.5 705.8 699.4 706.1 698.5 706.4 700.2 706.7 701.4 707.1 700.8 707.4 698.6 707.7 697.7 708 698.6 708.3 701.9 708.6 699 709 699.4 709.3 698.3 709.6 700.7 709.9 699.8 710.2 700 710.5 701.4 710.9 700.8 711.2 696.9 711.5 700.3 711.8 698.7 712.1 695.2 712.4 700.7 712.8 698.5 713.1 699.9 713.4 699.7 713.7 697.9 714 700.8 714.3 697.8 714.7 700.3 715 700.8 715.3 699.8 715.6 700.5 715.9 701.6 716.2 701.3 716.6 701.4 716.9 700.4 717.2 698.4 717.5 699.2 717.8 697.5 718.1 700.7 718.5 700.5 718.8 701.9 719.1 697.7 719.4 701.7 719.7 699.2 720 700 720.4 697.5 720.7 700.8 721 700.4 721.3 699.4 721.6 699 721.9 699.7 722.3 696.8 722.6 699.7 722.9 700 723.2 700.8 723.5 698.1 723.8 698.4 724.2 703.6 724.5 702.3 724.8 700.8 725.1 700.5 725.4 698.5 725.7 697.6 726 700.8 726.4 698.6 726.7 700.1 727 700.1 727.3 702.6 727.6 697 727.9 699.9 728.3 697.5 728.6 699.8 728.9 697.5 729.2 699.8 729.5 699.2 729.8 700 730.2 700.5 730.5 699.7 730.8 699.8 731.1 698.7 731.4 699 731.7 699.5 732.1 699.8 732.4 700.3 732.7 700.5 733 697.9 733.3 701.4 733.6 700.5 734 699.8 734.3 699.9 734.6 698.5 734.9 700.7 735.2 696.3 735.5 696.5 735.9 700.9 736.2 698.9 736.5 699.5 736.8 698.7 737.1 700.9 737.4 698.4 737.8 699.9 738.1 700.5 738.4 702.2 738.7 701.5 739 699.9 739.3 701.1 739.7 699.2 740 699.9 740.3 701 740.6 702 740.9 698.1 741.2 699.3 741.6 700.6 741.9 700.8 742.2 700.4 742.5 695.2 742.8 698.5 743.1 698.2 743.5 700.6 743.8 699.1 744.1 699.6 744.4 698.8 744.7 699.2 745 698.6 745.4 699.4 745.7 699.5 746 700.6 746.3 698.6 746.6 697.3 746.9 699.3 747.3 700.3 747.6 699.1 747.9 701.1 748.2 699.9 748.5 698.6 748.8 700.9 749.2 700.4 749.5 699.5 749.8 699.4 750.1 697 750.4 700.6 750.7 703.3 751 701 751.4 700.7 751.7 700 752 699.3 752.3 702.3 752.6 700.3 752.9 701.5 753.3 699.7 753.6 700.9 753.9 701.1 754.2 698.7 754.5 697.9 754.8 700.7 755.2 701.3 755.5 700.8 755.8 699.3 756.1 697.6 756.4 698.9 756.7 701.4 757.1 701.1 757.4 699.5 757.7 701.1 758 699.6 758.3 698.6 758.6 699.9 759 698.8 759.3 701.2 759.6 698.8 759.9 700.2 760.2 701.6 760.5 699.8 760.9 698.8 761.2 701.3 761.5 700.6 761.8 701.6 762.1 699.8 762.4 700.5 762.8 699.7 763.1 700.7 763.4 700 763.7 699.3 764 698.2 764.3 698.8 764.7 699.3 765 700.5 765.3 700.6 765.6 699.6 765.9 701.1 766.2 702.5 766.6 699.3 766.9 700.9 767.2 700.5 767.5 700.4 767.8 700 768.1 696.4 768.5 701.5 768.8 696.9 769.1 697.4 769.4 700.3 769.7 701.1 770 700.8 770.4 698.3 770.7 698.1 771 700.1 771.3 697.5 771.6 702 771.9 702.3 772.3 699.7 772.6 699.6 772.9 700.2 773.2 702.9 773.5 698.5 773.8 698.7 774.1 700.6 774.5 699.2 774.8 701.2 775.1 703.2 775.4 701.1 775.7 698.9 776 700.2 776.4 699.6 776.7 698.3 777 701 777.3 701.9 777.6 700.8 777.9 702.6 778.3 698.7 778.6 699.7 778.9 697.9 779.2 700.1 779.5 702 779.8 699.9 780.2 699.4 780.5 701.1 780.8 701.9 781.1 700.3 781.4 699.8 781.7 701.9 782.1 700.7 782.4 702 782.7 699 783 700 783.3 699.1 783.6 697.7 784 698.4 784.3 700.8 784.6 701.3 784.9 699.6 785.2 699.3 785.5 702 785.9 699 786.2 700.8 786.5 698.2 786.8 697.5 787.1 700.2 787.4 699.8 787.8 699 788.1 697.7 788.4 700.4 788.7 698.7 789 702.6 789.3 700.8 789.7 699.1 790 698.3 790.3 699.9 790.6 698.9 790.9 698.1 791.2 700.9 791.6 698.8 791.9 700.8 792.2 699.1 792.5 700.5 792.8 700.3 793.1 701.6 793.5 701.3 793.8 698.6 794.1 701.3 794.4 702.8 794.7 698.7 795 701.1 795.4 699.9 795.7 700.6 796 704 796.3 696.3 796.6 698.5 796.9 700.1 797.2 698.3 797.6 699.7 797.9 701.4 798.2 700 798.5 698.5 798.8 701.5 799.1 700.7 799.5 698.8 799.8 700.8 800.1 696.8 800.4 697.2 800.7 700.3 801 699.6 801.4 701.8 801.7 699.8 802 697.5 802.3 703.5 802.6 700.1 802.9 700.3 803.3 697.9 803.6 702.8 803.9 702.4 804.2 702.2 804.5 700.7 804.8 701.5 805.2 701.3 805.5 697.9 805.8 702.1 806.1 698.1 806.4 696.9 806.7 696.3 807.1 701.3 807.4 697.4 807.7 701.5 808 700.7 808.3 700.6 808.6 699.5 809 700.4 809.3 701.4 809.6 698.8 809.9 698.3 810.2 701.6 810.5 696.7 810.9 701.8 811.2 696.7 811.5 699.9 811.8 702 812.1 701.8 812.4 697.8 812.8 699.3 813.1 701.5 813.4 701.4 813.7 695.4 814 700.7 814.3 698.5 814.7 702.9 815 698.9 815.3 702.9 815.6 700.9 815.9 701.6 816.2 701.4 816.6 700.7 816.9 699.2 817.2 699.2 817.5 699 817.8 698.4 818.1 699.5 818.5 700.2 818.8 699.7 819.1 701.7 819.4 699.6 819.7 701.5 820 700.8 820.3 702.5 820.7 700.9 821 701.9 821.3 701.3 821.6 700.1 821.9 701.6 822.2 698.5 822.6 700.4 822.9 700.4 823.2 701.5 823.5 698 823.8 700.1 824.1 701.1 824.5 701.4 824.8 699.3 825.1 700.7 825.4 698 825.7 700.2 826 700 826.4 700.4 826.7 702.1 827 701.5 827.3 700.8 827.6 701.2 827.9 699.9 828.3 700.7 828.6 700.6 828.9 699.3 829.2 700.3 829.5 702.9 829.8 700 830.2 700.4 830.5 698.7 830.8 698.9 831.1 698.3 831.4 699 831.7 702.5 832.1 702.2 832.4 700.2 832.7 696.9 833 702 833.3 699.2 833.6 698.6 834 702.3 834.3 700.3 834.6 703 834.9 700.5 835.2 699.1 835.5 699.1 835.9 697.1 836.2 700.2 836.5 699.3 836.8 701 837.1 699.9 837.4 702.8 837.8 699.3 838.1 700.7 838.4 702.9 838.7 701.2 839 702.5 839.3 702.4 839.7 699.9 840 699.5 840.3 696.6 840.6 700.1 840.9 700 841.2 700.6 841.6 702.6 841.9 699.8 842.2 699.7 842.5 700.9 842.8 699.9 843.1 699.5 843.4 699 843.8 700.1 844.1 700.7 844.4 698.7 844.7 699.3 845 700.2 845.3 698.8 845.7 701.4 846 701.4 846.3 699.7 846.6 703.9 846.9 701.6 847.2 700.9 847.6 700.7 847.9 701.9 848.2 702.3 848.5 700.8 848.8 703.9 849.1 700.2 849.5 699.3 849.8 698.9 850.1 699.5 850.4 699.9 850.7 699.6 851 699.3 851.4 701 851.7 698.3 852 698.2 852.3 700.1 852.6 698.8 852.9 703 853.3 699.7 853.6 700.6 853.9 698.3 854.2 704.9 854.5 699.6 854.8 701.5 855.2 700.5 855.5 701 855.8 699.3 856.1 696.5 856.4 697.9 856.7 702.4 857.1 700.9 857.4 701 857.7 699.3 858 699.7 858.3 699.6 858.6 698.4 859 701.1 859.3 699.1 859.6 697.6 859.9 700.2 860.2 700 860.5 699.2 860.9 700.5 861.2 701 861.5 701.8 861.8 699.3 862.1 699.1 862.4 701.1 862.8 700.2 863.1 699.5 863.4 701.3 863.7 702.1 864 701.1 864.3 698.7 864.7 696.2 865 701.4 865.3 699.7" fill="none" stroke="#4DBEEE" stroke-width="1.1"/><path d="M75.9 698.6h0M76.2 695h0M77.3 698.2h0M78 697.3h0M78.5 695.2h0M80.8 698.6h0M82.1 698.9h0M82.7 697.4h0M84.3 698.4h0M84.6 697.9h0M84.8 698.3h0M85.7 698.4h0M87 698.8h0M87.2 698.3h0M88.1 695h0M88.6 699h0M92.4 698.9h0M92.5 698.4h0M94.8 698.4h0M95.4 698.7h0M96 698.2h0M97.3 698.4h0M99.8 698.5h0M101.1 698.6h0M102 697h0M102.5 697.9h0M102.7 697h0M103.8 697.3h0M105.8 698.9h0M106.1 698.3h0M106.9 696.5h0M107.4 698.3h0M108.2 697.6h0M110.3 696.8h0M110.9 698h0M112.2 698.8h0M114.8 694.1h0M115.6 698.1h0M116.7 693.5h0M118.6 698.5h0M120.4 696.8h0M121.5 697.7h0M122.4 698.2h0M122.9 698.5h0M123.5 697.6h0M123.7 698.5h0M123.9 697.6h0M124.5 698.7h0M124.7 698.3h0M125.1 698.7h0M125.8 698.4h0M127.3 698.5h0M128 698.1h0M129.1 697.9h0M131.1 698.8h0M131.5 698.6h0M131.8 696.8h0M132.4 698.3h0M136 697.8h0M136.5 698.3h0M136.8 698.7h0M137.5 697.5h0M138.3 698.7h0M139.1 698.3h0M139.8 698.1h0M140.5 699h0M140.8 698.9h0M141.7 695.9h0M142.5 697.9h0M143.3 698.6h0M143.6 698.7h0M144.6 697.8h0M145.4 697.6h0M147.1 696.2h0M148.2 698.2h0M149 698.2h0M149.8 698.7h0M150.4 698.8h0M152.2 699h0M154.4 697.9h0M154.7 698.5h0M155.5 698.8h0M156 696.5h0M156.5 698.3h0M156.8 698.8h0M157.2 699h0M157.6 697.7h0M158.2 697.4h0M160.7 698.2h0M162.5 695.9h0M164.8 698.9h0M165.5 698.2h0M166 698.1h0M169 697.2h0M169.6 698.1h0M169.7 698.8h0M169.9 698.1h0M170.5 698.9h0M172.1 697.4h0M173.7 698.8h0M174.3 698.5h0M174.5 697.5h0M174.7 697.9h0M176.4 697.9h0M176.6 698.8h0M179.1 698.6h0M180.2 699h0M180.7 698.3h0M181 698.5h0M182.7 698.3h0M183.7 699h0M184.1 698.5h0M184.3 697.3h0M187 698h0M187.2 698.7h0M187.3 697.3h0M187.6 695.5h0M187.9 699h0M190.9 696.3h0M191.6 697h0M192.1 698.4h0M193.8 698.8h0M195.1 698.7h0M196.3 698h0M197 695.8h0M197.3 698.5h0M197.6 699h0M198.7 698.5h0M199 697.8h0M200.1 697.8h0M200.4 698.7h0M201.1 697.5h0M201.2 697.7h0M204.4 698.5h0M205.8 698.3h0M206.6 696.7h0M208 693.8h0M208.8 698.7h0M210.3 699h0M210.4 697.9h0M211 697.7h0M213.3 698h0M215.2 698.4h0M216.1 698.8h0M216.7 698.7h0M219 697.8h0M220.1 697.2h0M221.8 693.5h0M222.6 696.9h0M222.8 697.2h0M224.2 698.1h0M225.8 698.7h0M226.7 697.8h0M227.7 698.4h0M228.3 696.7h0M228.6 698.6h0M228.9 697.6h0M229.6 698.4h0M230.7 697.7h0M231.3 697h0M231.5 697.5h0M231.6 696.8h0M235.3 697.3h0M236.2 698.8h0M236.5 697.6h0M236.7 698.2h0M237 698.3h0M238.3 698.9h0M238.4 698.1h0M240 698.7h0M242.1 699h0M242.4 697.3h0M243.5 698.4h0M244.4 697.4h0M247.3 698h0M248.2 696.5h0M250.9 697.4h0M251.1 698.5h0M251.2 697.6h0M252.2 698.8h0M252.5 697.8h0M252.7 698.6h0M255.3 698.3h0M255.8 694h0M256.1 698.5h0M256.3 698.6h0M256.6 697h0M256.8 698.7h0M256.9 697.6h0M257.1 698.5h0M259.6 697.9h0M259.9 698.2h0M260.7 698.7h0M260.9 697.3h0M261.7 697h0M262.8 698.9h0M263.7 698.2h0M265.3 697.2h0M266.7 698.4h0M267.5 698.5h0M267.8 695.2h0M269.4 698.7h0M270.1 696.7h0M270.4 698.7h0M271.8 697.7h0M272.1 698.1h0M273.9 698.9h0M275 697.1h0M275.3 698.5h0M275.8 696.5h0M276.2 696.4h0M277.2 697.8h0M277.3 698.2h0M277.8 698.8h0M278.3 697.3h0M279.4 698.7h0M279.6 696.6h0M280.5 697.2h0M281.1 696.6h0M283.2 698.7h0M283.7 698.7h0M283.8 697.5h0M284 696.9h0M287 697.4h0M288.6 698.9h0M289 698.8h0M290.9 698.5h0M291.1 697.4h0M291.9 696.3h0M292.1 698.2h0M296.6 697.5h0M297.1 698.1h0M297.4 698.4h0M297.6 697.9h0M298.1 698.3h0M298.4 698.4h0M299.3 697.9h0M300 699h0M300.3 698.2h0M302.7 697.4h0M303.1 698.1h0M303.9 697.9h0M304.1 697.8h0M306.5 697.7h0M309 698.8h0M309.1 698h0M309.3 697.9h0M309.5 698.9h0M309.6 698.5h0M310.2 698.2h0M310.6 696.9h0M310.7 697h0M312 698.8h0M312.1 698.9h0M312.5 698.2h0M313.6 698.2h0M313.9 696.7h0M314 698h0M314.5 698.2h0M314.7 698.8h0M316.4 697.9h0M316.9 697.5h0M318.8 698.5h0M319.1 698.9h0M319.7 697.2h0M321 697.7h0M322.4 698.7h0M323.1 696.9h0M326.1 696.3h0M327.2 699h0M327.7 698.2h0M328 696.2h0M328.1 698.7h0M329.6 698.3h0M329.7 698.8h0M331.1 698.7h0M331.4 699h0M331.6 698.8h0M333.5 694.7h0M335.2 698.5h0M336.8 698.8h0M339.7 695.4h0M340 698.8h0M341.9 696.9h0M343.2 698h0M344.3 698.6h0M344.4 698.1h0M345.7 698.8h0M346 699h0M346.3 697.1h0M346.5 698.4h0M347 699h0M348.2 698.7h0M348.4 698.7h0M349.6 698.9h0M349.8 698.4h0M350.6 696.5h0M353.6 697.4h0M355.5 697.6h0M358.2 698.9h0M358.3 698.8h0M359.8 698.3h0M362.1 698.7h0M364.2 698.2h0M364.5 698.6h0M366.1 697.3h0M366.7 698.6h0M366.9 698.9h0M368 699h0M369.4 698.7h0M370.5 698h0M370.8 696.5h0M371.3 697.9h0M371.8 698.7h0M372.1 698.4h0M372.3 696.5h0M373.4 698.2h0M374.5 698.7h0M375.3 696.8h0M375.6 698.4h0M375.8 696.8h0M376.4 698.7h0M376.7 698.6h0M377.3 698.5h0M378.1 697.6h0M378.3 698.3h0M378.4 698.3h0M378.9 698.6h0M379.5 698.1h0M382.2 699h0M384.3 698.6h0M384.8 698.2h0M384.9 698.3h0M385.4 698h0M386.7 698.3h0M387 696.9h0M392 698.8h0M394.7 697.2h0M395.4 698.9h0M395.8 697.3h0M396.6 698.4h0M397.1 698h0M399 698.6h0M403.4 698.6h0M403.8 698.9h0M404.4 698.8h0M404.9 698.7h0M405.7 697.9h0M406.3 698.3h0M406.8 697.5h0M407.4 698.6h0M408.2 697.8h0M408.3 698.2h0M409 696.2h0M409.8 697.4h0M411.5 698.6h0M412.6 697.6h0M413.2 698.7h0M414.5 697.8h0M415.9 697.4h0M417.2 698.4h0M417.5 697.7h0M417.7 697.4h0M418.6 698.3h0M419.6 697.2h0M421.3 698.2h0M424.2 696.6h0M424.5 698h0M424.8 697.7h0M425 697.2h0M425.6 698.2h0M427.2 697.4h0M428 697.1h0M428.6 697.9h0M430 698.5h0M430.3 697.7h0M430.7 698.2h0M434.6 698.3h0M434.9 697.4h0M440.3 699h0M440.5 697.8h0M442.2 697.3h0M442.4 698.8h0M443.6 697.8h0M444.3 698.3h0M444.6 694.1h0M445.1 698.3h0M445.8 698.5h0M447.4 698.5h0M447.7 698.2h0M448.2 698.9h0M450 696.9h0M452.3 696.9h0M452.8 698.2h0M453 697.4h0M453.3 698.8h0M454.1 697.7h0M457.7 697h0M459.3 698.8h0M459.6 696.9h0M462.5 698.6h0M464.2 697.8h0M464.4 699h0M465.3 696.7h0M468.3 698.5h0M468.8 698.5h0M468.9 698.9h0M469.9 697.7h0M472.1 698.7h0M476.5 698.1h0M477.8 697.6h0M478.1 697.1h0M478.4 697.3h0M480.5 698.1h0M481.9 697.9h0M482.1 698.9h0M483.2 698h0M484.4 698h0M485.2 698.9h0M486.5 698.2h0M487.1 695.4h0M487.8 698.5h0M490.1 696.9h0M491.9 697.3h0M496.6 697.4h0M498.5 698.2h0M499.2 697.2h0M500.7 697.8h0M502.6 697.5h0M507.9 698.5h0M508.2 697.7h0M511 697.7h0M512.5 698h0M513.2 698.5h0M513.7 698.7h0M514.4 698.3h0M514.8 697.9h0M516.1 698.6h0M516.4 698.2h0M518.9 697.9h0M519.1 698.1h0M521.6 697.6h0M525.6 696.4h0M526.9 693.9h0M527.5 698.8h0M528 698.9h0M530 697.3h0M530.2 698h0M531.8 698.9h0M532.2 698.9h0M532.7 697.1h0M533.2 698.9h0M533.5 698.8h0M534.3 698.3h0M534.6 698.7h0M536.5 697.4h0M536.7 698.9h0M538.6 698.4h0M538.9 698.7h0M539.2 698.4h0M539.5 698.1h0M543.5 698h0M543.9 697.6h0M544.1 698.6h0M544.3 698.2h0M544.6 698.2h0M545 698.2h0M545.2 697.7h0M546.8 698.7h0M547.1 697.2h0M547.7 698.6h0M550 698.5h0M551.4 696.7h0M551.7 699h0M551.8 697.7h0M552 697.3h0M552.3 698.8h0M553.3 698.8h0M553.6 697.7h0M553.7 695h0M554.1 698.8h0M554.4 697.6h0M560.6 696.3h0M561 697.6h0M561.2 698h0M561.5 695.5h0M561.7 699h0M562.3 698.6h0M563.4 698.6h0M565.3 698.6h0M565.9 698.5h0M566.6 698.7h0M567.4 698.7h0M568.9 698.6h0M570.5 697.9h0M571 699h0M571.6 698.3h0M571.9 696.6h0M572.1 698.9h0M572.6 697.9h0M574 698.9h0M574.2 698.4h0M574.6 698.7h0M576.2 698h0M576.4 698.4h0M577.2 697.5h0M578.6 698.8h0M579.2 697.9h0M580.3 698.4h0M580.5 698.5h0M584.3 698.9h0M585.4 698.7h0M585.7 698.3h0M586.3 697.5h0M587.3 698.1h0M587.9 698.7h0M588.9 698.6h0M589 694.4h0M589.7 698.7h0M590.8 698.4h0M591.7 698.4h0M592.2 697.8h0M593.9 697.9h0M594.9 698.8h0M595 698.8h0M595.7 698.8h0M596 698.4h0M597.4 697.5h0M597.9 698.8h0M598.5 694.7h0M598.7 697.8h0M600.1 697.3h0M602.5 696.5h0M603 698.7h0M603.9 697.7h0M604.1 698.9h0M604.5 698.8h0M608.8 698.1h0M611.2 698h0M612.3 695.5h0M613.4 697h0M614.5 697.1h0M614.7 697.1h0M615.6 698h0M617.7 698.5h0M618.9 697.8h0M620.2 698h0M620.4 698.2h0M620.7 698.6h0M621.3 698.2h0M623.4 696.8h0M623.5 699h0M623.7 697.3h0M625.9 698.8h0M626.4 698.6h0M627.5 697.9h0M627.6 698.4h0M628 697.6h0M628.3 699h0M628.7 699h0M628.9 698.7h0M629.1 699h0M629.5 696.8h0M630.6 698.3h0M631.1 698.3h0M633.3 698.8h0M634.3 696.7h0M634.8 698.1h0M635.4 698.1h0M640.5 697.9h0M641.9 699h0M643 698.8h0M643.5 697.8h0M643.6 698.4h0M644.9 698.3h0M645.8 698.7h0M646.6 698h0M646.8 697.9h0M647.9 698.6h0M648.5 697.9h0M649.3 698.4h0M650.1 697.8h0M651.2 698.5h0M651.8 698.4h0M652.2 698.8h0M656.1 698.2h0M656.4 697.2h0M656.9 698.2h0M657.2 698.9h0M657.7 698.9h0M660.5 698.9h0M661.2 698.7h0M661.8 696.9h0M662.6 697.8h0M663.2 696.3h0M663.7 698.1h0M664.3 698.1h0M664.5 697.6h0M665.3 697.8h0M665.5 698.7h0M667.8 698.7h0M670.7 697.6h0M672.7 698.6h0M674.8 698.6h0M675.4 698.7h0M677.6 698.9h0M679.7 698.2h0M680.2 698.4h0M681.6 698.5h0M682.4 698.4h0M683.3 698.3h0M683.8 698.9h0M685.1 696.3h0M687.9 698h0M689.7 697.1h0M691.1 698h0M691.9 699h0M694.7 695.9h0M695.8 697.6h0M697.3 694.3h0M699.3 698h0M699.6 698.1h0M700.3 699h0M702.3 698.6h0M702.8 698.2h0M703.1 695.7h0M703.3 698.9h0M703.6 697.2h0M704.1 698.3h0M705.2 697.9h0M706 698.9h0M706.9 698.9h0M707.4 698.6h0M708 698.6h0M709.3 698.3h0M709.8 697.3h0M710.4 698.4h0M711.2 696.9h0M711.8 698.7h0M712.1 695.2h0M712.6 698.9h0M713.7 697.9h0M713.9 695.8h0M714.3 697.8h0M716.7 698.3h0M717 696h0M720.5 698.5h0M721.8 698.9h0M722.3 696.8h0M723.5 698.1h0M723.8 698.4h0M725.3 698.6h0M725.4 698.5h0M725.7 697.6h0M725.9 698.6h0M726.2 699h0M726.4 698.6h0M728.3 697.5h0M728.9 697.5h0M730 698.5h0M730.3 698.3h0M731.1 698.7h0M734.8 698.9h0M735.2 696.3h0M736.3 698.2h0M737.6 696.7h0M737.9 698.9h0M740.9 698.1h0M743.1 698.2h0M744.4 698.8h0M746.3 698.6h0M746.6 697.3h0M748.5 698.6h0M750.1 697h0M753.7 698.8h0M754.1 698.4h0M754.5 697.9h0M755 698.1h0M756.1 697.6h0M756.4 698.9h0M758.3 698.6h0M759.6 698.8h0M760.9 698.8h0M764 698.2h0M765.1 697.8h0M765.4 699h0M768 699h0M768.1 696.4h0M768.8 696.9h0M769.1 697.4h0M769.6 698.3h0M769.9 698.9h0M770.4 698.3h0M770.7 698.1h0M771.1 698.6h0M771.8 698.2h0M773 697.4h0M773.5 698.5h0M774.6 698.9h0M775.7 698.9h0M776.2 698.7h0M778.3 698.7h0M778.9 697.9h0M781.3 698h0M782.9 698h0M783.6 697.7h0M784.4 697.7h0M785.9 699h0M786 698.7h0M786.5 698.2h0M786.8 697.5h0M787.8 699h0M790.6 698.9h0M790.8 697.7h0M790.9 698.1h0M791.1 698.6h0M791.6 698.8h0M792 698.9h0M792.7 698.8h0M793.3 698.8h0M794.6 698.4h0M794.7 698.7h0M796.6 698.5h0M797.1 698.2h0M797.2 698.3h0M799.5 698.8h0M800.1 696.8h0M800.9 698.9h0M801.5 698h0M801.8 698.2h0M803.3 697.9h0M803.4 697.3h0M805.5 697.9h0M806.1 698.1h0M806.4 696.9h0M806.7 696.3h0M807.5 697.8h0M808.8 698.7h0M809.6 698.8h0M811.2 696.7h0M811.3 699h0M812 699h0M812.4 697.8h0M812.6 698.5h0M813.7 695.4h0M814.3 698.5h0M815 698.9h0M816.1 698.6h0M817.8 698.4h0M819.9 698.6h0M820.8 698.2h0M825.4 698h0M830.5 698.7h0M832.2 698h0M832.8 698h0M833.6 698.6h0M835.7 697.5h0M836 699h0M837.9 697.7h0M839.2 698.1h0M840.3 696.6h0M840.8 698.7h0M841.7 698.9h0M842.7 699h0M843.4 699h0M844.4 698.7h0M849.8 698.9h0M851.7 698.3h0M852 698.2h0M852.6 698.8h0M855 698.3h0M855.9 698.8h0M858.2 698.1h0M858.6 698.4h0M859.6 697.6h0M864.3 698.7h0M864.7 696.2h0" fill="none" stroke="#4DBEEE" stroke-width="2.6" stroke-linecap="round"/><path d="M74.5 701.3 L75 700.6 L76.5 700.5 L78 700.8 L79.5 700.9 L81 699.7 L82.5 701.1 L84 702 L85.5 701.2 L87 702 L88.5 699.8 L90 701.3 L91.5 702.2 L93 702.3 L94.5 701.1 L96 700.9 L97.5 701.6 L99 700.7 L100.5 701.2 L102 700.5 L103.5 701.4 L105 701.4 L106.5 702.3 L108 701.6 L109.5 701 L111 701.3 L112.5 700.7 L114 701.4 L115.5 701.3 L117 701.6 L118.5 701.9 L120 700.3 L121.5 701.6 L123 701.8 L124.5 700.7 L126 702.4 L127.5 701 L129 702.8 L130.5 701.8 L132 701.9 L133.5 701.5 L135 702 L136.5 700.8 L138 701 L139.5 700.3 L141 701.7 L142.5 701 L144 701.8 L145.5 701.7 L147 700.7 L148.5 701.8 L150 701.5 L151.5 701.5 L153 701.7 L154.5 701.4 L156 701.4 L157.5 702 L159 700.9 L160.5 700.7 L162 701 L163.5 702 L165 701.2 L166.5 702.5 L168 699.7 L169.5 701 L171 701.2 L172.5 701.5 L174 702.1 L175.5 701.3 L177 700.8 L178.5 701.9 L180 702.3 L181.5 700 L183 701.7 L184.5 701.6 L186 700.9 L187.5 701.1 L189 701.6 L190.5 701.4 L192 701.3 L193.5 700.8 L195 701.6 L196.5 701 L198 701.4 L199.5 701.1 L201 701.5 L202.5 701.8 L204 701.5 L205.5 701.8 L207 700.6 L208.5 701.7 L210 701.6 L211.5 701.1 L213 701.3 L214.5 699.9 L216 701.4 L217.5 701.2 L219 700.1 L220.5 701.7 L222 701 L223.5 701.6 L225 701.3 L226.5 701.7 L228 701.4 L229.5 701.2 L231 701.7 L232.5 701.9 L234 700.1 L235.5 701.4 L237 701.1 L238.5 700.8 L240 702.1 L241.5 701.9 L243 700.8 L244.5 700.8 L246 701.8 L247.5 701.1 L249 701.2 L250.5 700.3 L252 701.3 L253.5 702 L255 701.1 L256.5 701.3 L258 702.4 L259.5 701.9 L261 702.2 L262.5 701.7 L264 702.1 L265.5 700.5 L267 700.9 L268.5 700.5 L270 702.6 L271.5 701.5 L273 701.3 L274.5 701 L276 700.8 L277.5 699.9 L279 702.6 L280.5 701.4 L282 701.4 L283.5 700.6 L285 701.4 L286.5 701.6 L288 701.4 L289.5 701.7 L291 700.9 L292.5 701.6 L294 701.9 L295.5 701.7 L297 701.6 L298.5 701.3 L300 700.9 L301.5 701.7 L303 701.2 L304.5 700.9 L306 701.8 L307.5 700.5 L309 701.1 L310.5 701.8 L312 701.9 L313.5 701.2 L315 701.4 L316.5 701.7 L318 701.4 L319.5 701 L321 701.6 L322.5 701.5 L324 701.5 L325.5 702 L327 701.6 L328.5 701.1 L330 701.5 L331.5 702.5 L333 701 L334.5 701.3 L336 701 L337.5 701.6 L339 700.7 L340.5 701.6 L342 701.8 L343.5 701 L345 700.9 L346.5 700.6 L348 701.4 L349.5 700.8 L351 701.1 L352.5 701.2 L354 701 L355.5 701.9 L357 702.3 L358.5 700.2 L360 700.9 L361.5 701.5 L363 700.8 L364.5 701.1 L366 701.5 L367.5 702.2 L369 702 L370.5 701.2 L372 701.5 L373.5 701.2 L375 701.3 L376.5 700.8 L378 700.4 L379.5 701.2 L381 701.9 L382.5 701.8 L384 700.4 L385.5 701.3 L387 701.1 L388.5 701.6 L390 700.8 L391.5 701.9 L393 701.3 L394.5 701.7 L396 701.9 L397.5 700.3 L399 701.3 L400.5 702.2 L402 701.4 L403.5 702 L405 701.6 L406.5 701.1 L408 701.6 L409.5 702 L411 702.1 L412.5 702.2 L414 700.8 L415.5 701.9 L417 700.6 L418.5 701.3 L420 701.3 L421.5 701.7 L423 701.6 L424.5 702.1 L426 701.1 L427.5 701.9 L429 701.6 L430.5 701.4 L432 700.7 L433.5 701.7 L435 701.6 L436.5 701.8 L438 701.4 L439.5 701.3 L441 701.6 L442.5 701.7 L444 701.8 L445.5 702.4 L447 701.1 L448.5 702.5 L450 699.8 L451.5 701.9 L453 700.9 L454.5 702.5 L456 700.9 L457.5 702 L459 700.9 L460.5 700.8 L462 701.8 L463.5 701.9 L465 701 L466.5 702.7 L468 701.2 L469.5 702.3 L471 700.8 L472.5 700.9 L474 701.4 L475.5 700.8 L477 701.6 L478.5 700.2 L480 701.5 L481.5 701.1 L483 700.9 L484.5 701.5 L486 701.3 L487.5 701.2 L489 701.8 L490.5 701.6 L492 701.6 L493.5 702.1 L495 701.4 L496.5 701.9 L498 701.2 L499.5 701.7 L501 701.7 L502.5 701.1 L504 700.6 L505.5 700.7 L507 700.9 L508.5 701.7 L510 701.3 L511.5 701.2 L513 701.7 L514.5 701.8 L516 702.2 L517.5 701.1 L519 701.7 L520.5 701.8 L522 700.9 L523.5 701.5 L525 700.9 L526.5 701.3 L528 701.6 L529.5 700.5 L531 700.9 L532.5 701 L534 701.4 L535.5 701 L537 701.6 L538.5 700.9 L540 701.1 L541.5 701.7 L543 701.6 L544.5 701.5 L546 701.4 L547.5 701.9 L549 702.2 L550.5 701.2 L552 701 L553.5 700.8 L555 702.3 L556.5 700.9 L558 700.7 L559.5 701.5 L561 702 L562.5 700.7 L564 701.3 L565.5 700.6 L567 701 L568.5 702.3 L570 701.5 L571.5 701.3 L573 701.4 L574.5 701.6 L576 701.3 L577.5 700.7 L579 700.8 L580.5 702.5 L582 701 L583.5 702.1 L585 701 L586.5 702.1 L588 701.8 L589.5 701.3 L591 702.5 L592.5 700.9 L594 701.3 L595.5 700.9 L597 701 L598.5 701.2 L600 700.9 L601.5 701.2 L603 702.3 L604.5 700.4 L606 700.7 L607.5 700.9 L609 701.1 L610.5 702 L612 701.8 L613.5 701.7 L615 701.5 L616.5 702.7 L618 700.8 L619.5 700.8 L621 701.4 L622.5 701.5 L624 701.3 L625.5 700.9 L627 700.7 L628.5 701.2 L630 701 L631.5 701.1 L633 700.8 L634.5 702.1 L636 701.6 L637.5 702.4 L639 701.1 L640.5 701.4 L642 701.3 L643.5 701.4 L645 701.3 L646.5 701.3 L648 700.3 L649.5 701.3 L651 701.8 L652.5 700.3 L654 701.2 L655.5 701.7 L657 702.1 L658.5 701.4 L660 701.6 L661.5 702.4 L663 702.1 L664.5 701.2 L666 701.1 L667.5 702 L669 701.5 L670.5 701.1 L672 701.3 L673.5 701.6 L675 701.3 L676.5 701.3 L678 701.3 L679.5 700.6 L681 702.3 L682.5 702.1 L684 702.2 L685.5 701.3 L687 701.5 L688.5 701.7 L690 701.8 L691.5 700.4 L693 701.6 L694.5 700.9 L696 701.4 L697.5 701 L699 702.3 L700.5 701.7 L702 701.4 L703.5 702.2 L705 701.4 L706.5 701 L708 701.3 L709.5 701.2 L711 701.4 L712.5 701.9 L714 701.3 L715.5 701.4 L717 702 L718.5 701.6 L720 701.9 L721.5 701.5 L723 700.7 L724.5 700.8 L726 700.5 L727.5 702 L729 701.6 L730.5 701.1 L732 700.9 L733.5 701.6 L735 701.3 L736.5 701.6 L738 700.9 L739.5 700.8 L741 702.3 L742.5 700.9 L744 701.4 L745.5 702.1 L747 700.4 L748.5 701.8 L750 701.4 L751.5 701.3 L753 701.5 L754.5 700.8 L756 700.2 L757.5 702.4 L759 701.2 L760.5 701.9 L762 702 L763.5 701.6 L765 701.6 L766.5 701.8 L768 702.3 L769.5 701.7 L771 702.1 L772.5 701.2 L774 701.2 L775.5 701.4 L777 701.6 L778.5 701.7 L780 702.5 L781.5 701.9 L783 701.4 L784.5 702.5 L786 701.6 L787.5 701.6 L789 701.7 L790.5 701.2 L792 700.8 L793.5 701.5 L795 701.2 L796.5 700.9 L798 701.5 L799.5 701.3 L801 701.1 L802.5 700.4 L804 701.3 L805.5 702.4 L807 701.9 L808.5 702 L810 701.4 L811.5 702 L813 701 L814.5 701.2 L816 701.7 L817.5 700.6 L819 701.4 L820.5 701.6 L822 702.3 L823.5 701 L825 701.6 L826.5 701 L828 701.1 L829.5 699.9 L831 700.9 L832.5 702 L834 701.7 L835.5 701.5 L837 702.7 L838.5 701.7 L840 700.7 L841.5 701.3 L843 701.4 L844.5 702.3 L846 700.9 L847.5 701.6 L849 701.9 L850.5 701 L852 701.5 L853.5 700.3 L855 701.5 L856.5 700.2 L858 701.2 L859.5 702.3 L861 701.6 L862.5 701.4 L864 701.5 L865.5 702.6" fill="none" stroke="#0072BD" stroke-width="4.6" stroke-linejoin="round"/><path d="M74.5 743.5 L74.5 700" stroke="#0072BD" stroke-width="1.6"/><path d="M74.5 743.5h0M74.5 723h0M74.5 716h0M74.5 713h0M74.5 711h0" stroke="#0072BD" stroke-width="3.2" stroke-linecap="round"/><path d="M90.3 694.7V704.1 M85.6 699.4H95 M87 696.1L93.6 702.7 M87 702.7L93.6 696.1M106.1 694.7V704.1 M101.4 699.4H110.8 M102.8 696.1L109.5 702.7 M102.8 702.7L109.5 696.1M122 694.7V704.1 M117.3 699.4H126.7 M118.6 696.1L125.3 702.7 M118.6 702.7L125.3 696.1M137.8 694.7V704.1 M133.1 699.4H142.5 M134.5 696.1L141.1 702.7 M134.5 702.7L141.1 696.1M153.6 694.7V704.1 M148.9 699.4H158.3 M150.3 696.1L156.9 702.7 M150.3 702.7L156.9 696.1M169.4 694.7V704.1 M164.7 699.4H174.1 M166.1 696.1L172.8 702.7 M166.1 702.7L172.8 696.1M185.3 694.7V704.1 M180.6 699.4H190 M181.9 696.1L188.6 702.7 M181.9 702.7L188.6 696.1M201.1 694.7V704.1 M196.4 699.4H205.8 M197.8 696.1L204.4 702.7 M197.8 702.7L204.4 696.1M216.9 694.7V704.1 M212.2 699.4H221.6 M213.6 696.1L220.2 702.7 M213.6 702.7L220.2 696.1M232.7 694.7V704.1 M228 699.4H237.4 M229.4 696.1L236 702.7 M229.4 702.7L236 696.1M248.5 694.7V704.1 M243.8 699.4H253.2 M245.2 696.1L251.9 702.7 M245.2 702.7L251.9 696.1M264.4 694.7V704.1 M259.7 699.4H269.1 M261 696.1L267.7 702.7 M261 702.7L267.7 696.1M280.2 694.7V704.1 M275.5 699.4H284.9 M276.9 696.1L283.5 702.7 M276.9 702.7L283.5 696.1M296 694.7V704.1 M291.3 699.4H300.7 M292.7 696.1L299.3 702.7 M292.7 702.7L299.3 696.1M311.8 694.7V704.1 M307.1 699.4H316.5 M308.5 696.1L315.2 702.7 M308.5 702.7L315.2 696.1M327.7 694.7V704.1 M323 699.4H332.4 M324.3 696.1L331 702.7 M324.3 702.7L331 696.1M343.5 694.7V704.1 M338.8 699.4H348.2 M340.2 696.1L346.8 702.7 M340.2 702.7L346.8 696.1M359.3 694.7V704.1 M354.6 699.4H364 M356 696.1L362.6 702.7 M356 702.7L362.6 696.1M375.1 694.7V704.1 M370.4 699.4H379.8 M371.8 696.1L378.4 702.7 M371.8 702.7L378.4 696.1M390.9 694.7V704.1 M386.2 699.4H395.6 M387.6 696.1L394.3 702.7 M387.6 702.7L394.3 696.1M406.8 694.7V704.1 M402.1 699.4H411.5 M403.4 696.1L410.1 702.7 M403.4 702.7L410.1 696.1M422.6 694.7V704.1 M417.9 699.4H427.3 M419.3 696.1L425.9 702.7 M419.3 702.7L425.9 696.1M438.4 694.7V704.1 M433.7 699.4H443.1 M435.1 696.1L441.7 702.7 M435.1 702.7L441.7 696.1M454.2 694.7V704.1 M449.5 699.4H458.9 M450.9 696.1L457.6 702.7 M450.9 702.7L457.6 696.1M470.1 694.7V704.1 M465.4 699.4H474.8 M466.7 696.1L473.4 702.7 M466.7 702.7L473.4 696.1M485.9 694.7V704.1 M481.2 699.4H490.6 M482.5 696.1L489.2 702.7 M482.5 702.7L489.2 696.1M501.7 694.7V704.1 M497 699.4H506.4 M498.4 696.1L505 702.7 M498.4 702.7L505 696.1M517.5 694.7V704.1 M512.8 699.4H522.2 M514.2 696.1L520.8 702.7 M514.2 702.7L520.8 696.1M533.3 694.7V704.1 M528.6 699.4H538 M530 696.1L536.7 702.7 M530 702.7L536.7 696.1M549.2 694.7V704.1 M544.5 699.4H553.9 M545.8 696.1L552.5 702.7 M545.8 702.7L552.5 696.1M565 694.7V704.1 M560.3 699.4H569.7 M561.7 696.1L568.3 702.7 M561.7 702.7L568.3 696.1M580.8 694.7V704.1 M576.1 699.4H585.5 M577.5 696.1L584.1 702.7 M577.5 702.7L584.1 696.1M596.6 694.7V704.1 M591.9 699.4H601.3 M593.3 696.1L599.9 702.7 M593.3 702.7L599.9 696.1M612.4 694.7V704.1 M607.7 699.4H617.1 M609.1 696.1L615.8 702.7 M609.1 702.7L615.8 696.1M628.3 694.7V704.1 M623.6 699.4H633 M624.9 696.1L631.6 702.7 M624.9 702.7L631.6 696.1M644.1 694.7V704.1 M639.4 699.4H648.8 M640.8 696.1L647.4 702.7 M640.8 702.7L647.4 696.1M659.9 694.7V704.1 M655.2 699.4H664.6 M656.6 696.1L663.2 702.7 M656.6 702.7L663.2 696.1M675.7 694.7V704.1 M671 699.4H680.4 M672.4 696.1L679.1 702.7 M672.4 702.7L679.1 696.1M691.6 694.7V704.1 M686.9 699.4H696.3 M688.2 696.1L694.9 702.7 M688.2 702.7L694.9 696.1M707.4 694.7V704.1 M702.7 699.4H712.1 M704.1 696.1L710.7 702.7 M704.1 702.7L710.7 696.1M723.2 694.7V704.1 M718.5 699.4H727.9 M719.9 696.1L726.5 702.7 M719.9 702.7L726.5 696.1M739 694.7V704.1 M734.3 699.4H743.7 M735.7 696.1L742.3 702.7 M735.7 702.7L742.3 696.1M754.8 694.7V704.1 M750.1 699.4H759.5 M751.5 696.1L758.2 702.7 M751.5 702.7L758.2 696.1M770.7 694.7V704.1 M766 699.4H775.4 M767.3 696.1L774 702.7 M767.3 702.7L774 696.1M786.5 694.7V704.1 M781.8 699.4H791.2 M783.2 696.1L789.8 702.7 M783.2 702.7L789.8 696.1M802.3 694.7V704.1 M797.6 699.4H807 M799 696.1L805.6 702.7 M799 702.7L805.6 696.1M818.1 694.7V704.1 M813.4 699.4H822.8 M814.8 696.1L821.5 702.7 M814.8 702.7L821.5 696.1M834 694.7V704.1 M829.3 699.4H838.7 M830.6 696.1L837.3 702.7 M830.6 702.7L837.3 696.1M849.8 694.7V704.1 M845.1 699.4H854.5 M846.5 696.1L853.1 702.7 M846.5 702.7L853.1 696.1M865.6 694.7V704.1 M860.9 699.4H870.3 M862.3 696.1L868.9 702.7 M862.3 702.7L868.9 696.1" stroke="#D4008A" stroke-width="1.55"/></svg>
  <div class="yl" style="top:113px">1000</div>
<div class="yl" style="top:222px">0</div>
<div class="yl" style="top:330px">-1000</div>
<div class="yl" style="top:439px">-2000</div>
<div class="yl" style="top:548px">-3000</div>
<div class="yl" style="top:656px">-4000</div>
<div class="yl" style="top:765px">-5000</div>
<div class="xl" style="left:48.5px">0</div>
<div class="xl" style="left:127.6px">500</div>
<div class="xl" style="left:207.7px">1000</div>
<div class="xl" style="left:287.3px">1500</div>
<div class="xl" style="left:365.9px">2000</div>
<div class="xl" style="left:445.1px">2500</div>
<div class="xl" style="left:524.2px">3000</div>
<div class="xl" style="left:603.3px">3500</div>
<div class="xl" style="left:682.4px">4000</div>
<div class="xl" style="left:761.5px">4500</div>
<div class="xl" style="left:840.6px">5000</div>
  <div class="t" style="left:421px;top:790px;font-size:13px;line-height:15px;color:#262626;will-change:transform">Episode Number</div>
  <div class="t" style="left:-21px;top:439px;width:96px;text-align:center;font-size:13px;line-height:15px;color:#262626;transform:rotate(-90deg)">Episode Reward</div>

  <!-- divider -->
  <div class="a" style="left:900px;top:59px;width:1px;height:789px;background:#c2c2c2"></div>

  <!-- right header -->
  <div class="a" style="left:901px;top:59px;width:301px;height:23px;background:#fff;border-bottom:1px solid #c6c6c6"></div>
  <div class="t" style="left:907px;top:62px;font-size:14px;letter-spacing:-0.48px;line-height:16px;color:#212121">Training Progress</div>
  <div class="a" style="left:1182px;top:65px;width:2px;height:2px;background:#666"></div>
  <div class="a" style="left:1182px;top:69px;width:2px;height:2px;background:#666"></div>
  <div class="a" style="left:1182px;top:73px;width:2px;height:2px;background:#666"></div>

  <!-- progress -->
  <div class="a" style="left:911px;top:97px;width:160px;height:15px;background:#268bdf"></div>
  <div class="a" style="left:1081px;top:92px;width:110px;height:25px;border:1px solid #cacaca;border-radius:4px"></div>
  <div class="t" style="left:1092px;top:97px;color:#a9a9a9">Training stopped</div>

  <div class="t" style="left:911px;top:128px">Episode number:</div>
  <div class="t" style="left:1041px;top:128px">5000/5000</div>
  <div class="t" style="left:911px;top:153px">Start time:</div>
  <div class="t" style="left:1041px;top:153px">29-Nov-2024 10:57:28</div>
  <div class="t" style="left:911px;top:178px">Duration:</div>
  <div class="t" style="left:1041px;top:178px">23:18:12</div>
  <div class="t" style="left:911px;top:202px">Final result:</div>
  <div class="t" style="left:1041px;top:202px;line-height:15px">Training finished with<br>maximum number of<br>episodes.</div>

  <!-- training information panel -->
  <div class="pb" style="left:911px;top:258px;width:280px;height:295px"></div>
  <div class="a" style="left:912px;top:278px;width:278px;height:1px;background:#808080"></div>
  <div class="t" style="left:916px;top:261px;font-weight:bold">Training Information</div>
  <div class="a" style="left:922px;top:289px;width:258px;height:95px;border:1px solid #808080;background:#fff"></div>
  <div class="a" style="left:923px;top:290px;width:256px;height:27px;background:#f4f4f4;border-bottom:1px solid #808080"></div>
  <div class="a" style="left:923px;top:317px;width:256px;height:25px;background:#268bdf;border-bottom:1px solid #808080"></div>
  <div class="a" style="left:1051px;top:290px;width:1px;height:52px;background:#808080"></div>
  <div class="t" style="left:926px;top:297px;font-weight:bold">Agent</div>
  <div class="t" style="left:1055px;top:297px;font-weight:bold">Status</div>
  <div class="t" style="left:925px;top:320px;color:#fff;-webkit-text-stroke:0.2px #fff">rlTD3Agent</div>
  <div class="t" style="left:1055px;top:320px;color:#fff;-webkit-text-stroke:0.2px #fff">Training finished</div>

  <div class="t" style="left:922px;top:395px;font-weight:bold">Episode Information (rlTD3Agent):</div>
  <div class="t" style="left:922px;top:420px">Episode reward:</div>
  <div class="t" style="left:1042px;top:420px">-4365.183</div>
  <div class="t" style="left:922px;top:445px">Average reward:</div>
  <div class="t" style="left:1042px;top:445px">-4361.3843</div>
  <div class="t" style="left:922px;top:470px">Episode Q0:</div>
  <div class="t" style="left:1042px;top:470px">-865.0502</div>
  <div class="t" style="left:922px;top:495px">Evaluation statistic:</div>
  <div class="t" style="left:1042px;top:495px">-4332.3855</div>
  <div class="a" style="left:1070px;top:519px;width:110px;height:23px;border:1px solid #6e6e6e;border-radius:4px"></div>
  <div class="t" style="left:1086.5px;top:523px">More Details...</div>

  <!-- plot options panel -->
  <div class="pb" style="left:911px;top:563px;width:280px;height:118px"></div>
  <div class="a" style="left:912px;top:583px;width:278px;height:1px;background:#808080"></div>
  <div class="t" style="left:915px;top:566px;font-weight:bold">Plot Options</div>
  <div class="chk" style="top:595px"></div>
  <div class="chk" style="top:622px"></div>
  <div class="chk" style="top:652px"></div>
  <svg class="a" style="left:922px;top:595px" width="14" height="14" viewBox="0 0 14 14"><path d="M1.9 6.6 L5.4 10.2 L11.9 2.9" fill="none" stroke="#1a1a1a" stroke-width="1.9"/></svg>
  <svg class="a" style="left:922px;top:622px" width="14" height="14" viewBox="0 0 14 14"><path d="M1.9 6.6 L5.4 10.2 L11.9 2.9" fill="none" stroke="#1a1a1a" stroke-width="1.9"/></svg>
  <div class="t" style="left:939px;top:595px">Show EpisodeQ0</div>
  <div class="t" style="left:939px;top:622px">Show evaluation statistic</div>
  <div class="t" style="left:939px;top:651px">Show last N episodes</div>
  <div class="a" style="left:1066px;top:647px;width:114px;height:23px;border:1px solid #d2d2d2;background:#f6f6f6"></div>
  <div class="t" style="left:1066px;top:652px;width:109px;text-align:right;color:#a3a3a3">5000</div>

  <!-- mini plot panel -->
  <div class="pb" style="left:911px;top:691px;width:280px;height:102px"></div>
  <div class="a" style="left:917px;top:697px;width:268px;height:90px;background:#fff"></div>
  <div class="a" style="left:1045px;top:692px;width:140px;height:5px;background:#fff"></div>
  <div class="a" style="left:912px;top:692px;width:133px;height:1px;background:#fff"></div>
  <svg class="a" style="left:960px;top:732px" width="180" height="20" viewBox="960 732 180 20"><path d="M970.4 742.5H1131.7" stroke="#EDB120" stroke-width="1.6"/><path d="M1050.5 738.3V746.7M1046.3 742.5H1054.7M1047.5 739.5L1053.5 745.5M1047.5 745.5L1053.5 739.5" stroke="#D4008A" stroke-width="1.1" stroke-linecap="round"/><circle cx="1050.5" cy="742.5" r="1.3" fill="#D4008A"/></svg>
  
  

<svg class="a" style="left:1040px;top:690px" width="150" height="25" viewBox="0 0 150 25">
    <rect x="7.7" y="14.8" width="11.6" height="3.6" fill="none" stroke="#a8a8a8" stroke-width="1"/>
    <path d="M11.1 15.6 Q11.2 9.6 15.6 9.4" fill="none" stroke="#9a9a9a" stroke-width="2.9" stroke-linecap="butt"/>
    <path d="M11.1 15.4 Q11.2 9.6 15.8 9.4" fill="none" stroke="#fff" stroke-width="1"/>
    <path d="M15.4 6.1 L19.6 9.4 L15.4 12.8 Z" fill="#fff" stroke="#9a9a9a" stroke-width="1" stroke-linejoin="round"/>
    <path d="M14.8 8.4 V10.4" stroke="#fff" stroke-width="1.2"/>
    <path d="M19.4 19.8 L22.9 16.1 L22.9 19.8 Z" fill="#6e6e6e"/>
    <g fill="none" stroke="#6a6a6a" stroke-width="1.1">
      <path d="M35.5 11.9 V5.6 H39.6 V11.9"/>
      <rect x="33.8" y="12.1" width="7.7" height="3.4"/>
      <path d="M33.8 15.5 L28.6 20.5 H41.2 L41.5 15.5"/>
      <path d="M31.5 20.2 L41 17.6 V20.2 Z" fill="#8a8a8a" stroke="none"/>
      <path d="M49.5 5.5 H62.5 V20.5 H49.5 V14.5 L47.6 13 L49.5 11.5 Z" stroke-width="1"/>
      <path d="M52.2 11.5 H60.2 M52.2 14.5 H60.2" stroke-width="1"/>
      <path d="M72.5 20.3 L67.8 12.8 Q67.3 11.7 68.5 11.5 Q70.2 11.4 71.3 13.2 L71 8.1 Q71 6.5 72.3 6.5 Q73.6 6.5 73.8 8.1 L74.4 11.9 L74.6 6.6 Q74.8 5.3 75.9 5.3 Q77.1 5.3 77.2 6.6 L76.4 11.9 L78 7.5 Q78.4 6.3 79.6 6.6 Q80.6 7 80.3 8.3 L79.4 11.9 L80.7 9 Q81.2 8 82.1 8.5 Q82.9 9 82.7 10.1 L80.5 20.3 Z"/>
      <circle cx="93.3" cy="11.2" r="5.9"/>
      <path d="M97.5 15.4 L102.6 20.5 M90.1 11.2 H96.5 M93.3 8 V14.4"/>
      <circle cx="113.5" cy="11.2" r="5.9"/>
      <path d="M117.7 15.4 L122.6 20.5 M110.3 11.2 H116.7"/>
      <path d="M127.3 13 L135 5.6 L142.9 13 M129.3 11.2 V20.3 H133.1 V14.6 H137.4 V20.3 H141.1 V11.2"/>
    </g>
    <path d="M138.3 6.4 L141.6 5.9 L141.2 9.2 Z" fill="#6a6a6a"/>
  </svg>

  <!-- status bar -->
  <div class="a" style="left:0;top:825px;width:1202px;height:24px;background:#e6e6e6"></div>
  <div class="a" style="left:0;top:825px;width:900px;height:1px;background:#7a7a7a"></div>
  <div class="a" style="left:901px;top:825px;width:301px;height:1px;background:#c0c0c0"></div>
  <div class="a" style="left:900px;top:825px;width:1px;height:24px;background:#c2c2c2"></div>
  <svg class="a" style="left:1185px;top:830px" width="12" height="14" viewBox="0 0 12 14"><path d="M1 1 L8 7 L1 13 Z" fill="#999"/><rect x="8" y="1" width="2" height="12" fill="#999"/></svg>
  <div class="frame"></div>
</div>
</body></html>
